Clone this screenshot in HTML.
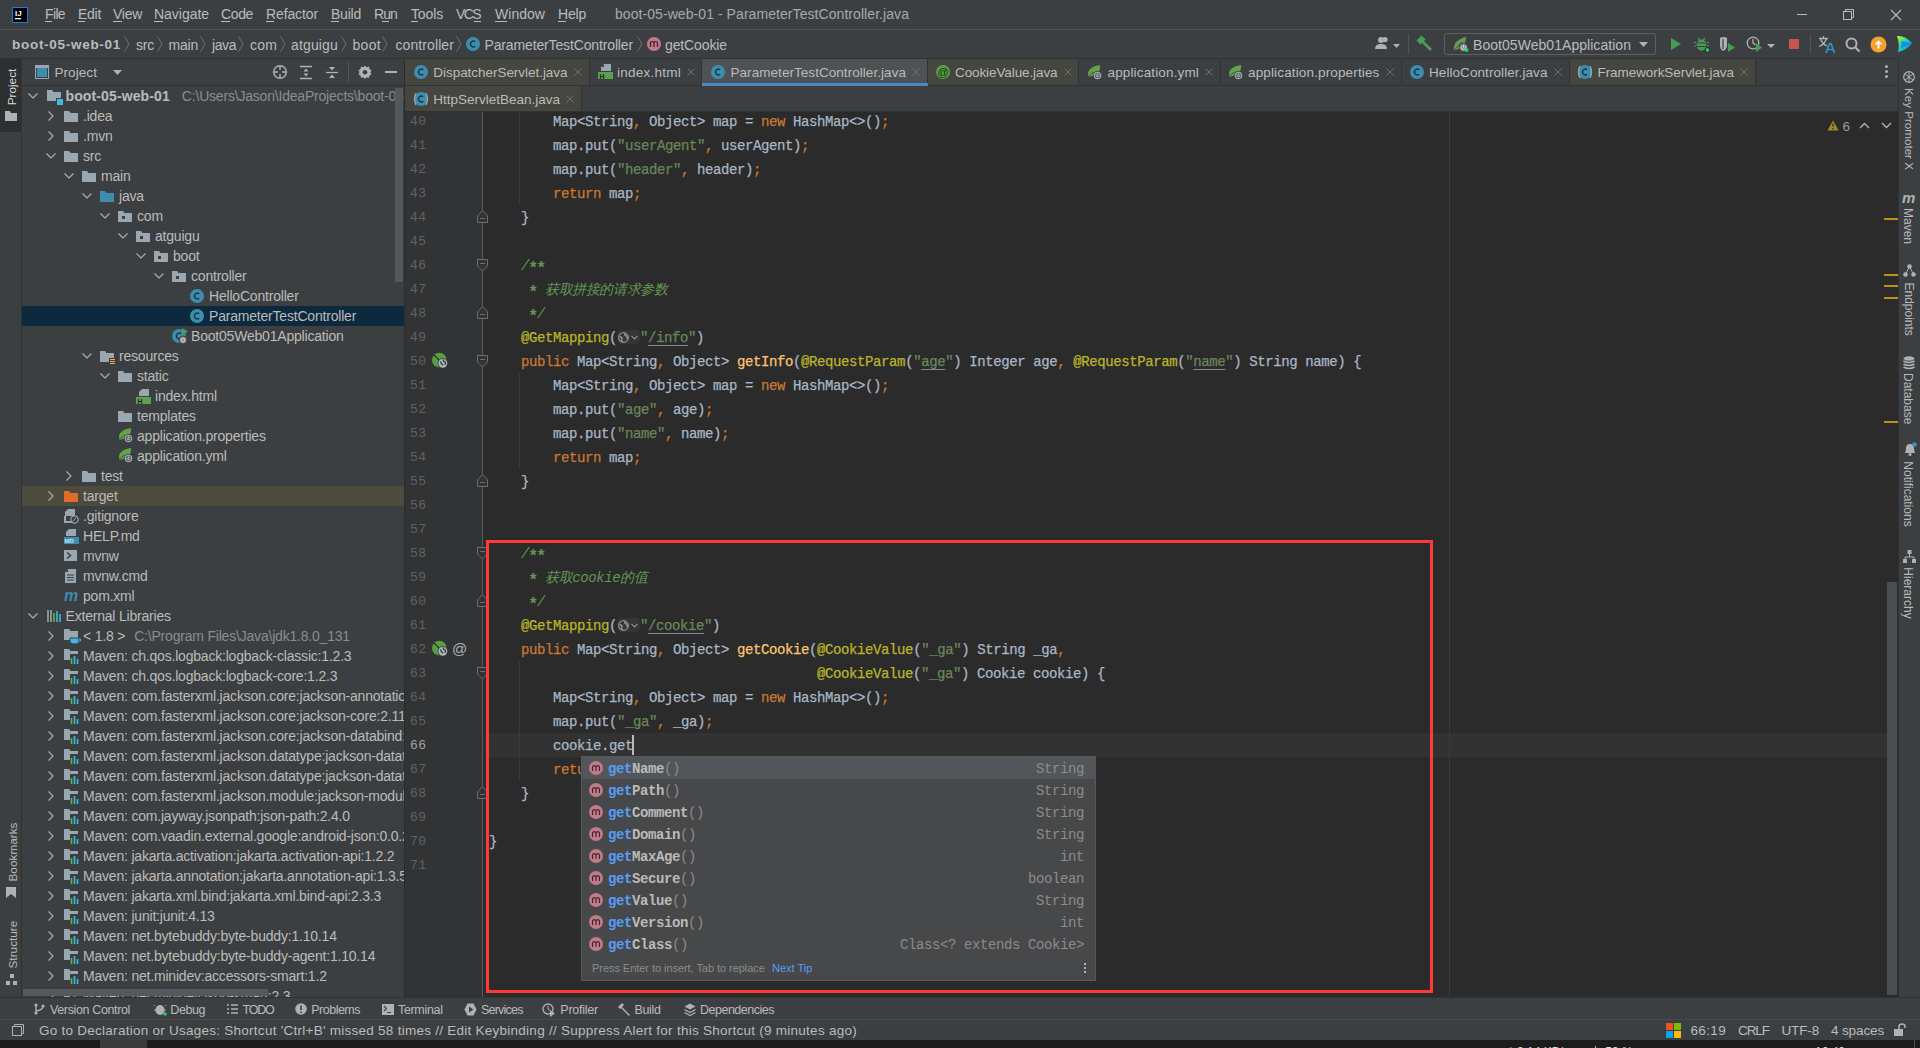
<!DOCTYPE html><html><head><meta charset="utf-8"><style>
html,body{margin:0;padding:0;width:1920px;height:1048px;overflow:hidden;background:#3C3F41}
body>div,body>svg{position:absolute}
.clip{position:absolute;overflow:hidden}
.clip>div,.clip>svg{position:absolute}
</style></head><body>
<div style="left:0px;top:0px;width:1920px;height:1048px;background:#3C3F41;"></div>
<div style="left:0px;top:29px;width:1920px;height:1px;background:#515658;"></div>
<div style="left:0px;top:58px;width:21px;height:939px;background:#3C3F41;"></div>
<div style="left:0px;top:58px;width:21px;height:74px;background:#2D2F30;"></div>
<div style="left:21px;top:58px;width:1px;height:939px;background:#323232;"></div>
<div style="left:22px;top:58px;width:382px;height:939px;background:#3C3F41;"></div>
<div style="left:22px;top:85px;width:382px;height:1px;background:#323232;"></div>
<div style="left:404px;top:58px;width:1px;height:939px;background:#2B2B2B;"></div>
<div style="left:405px;top:58px;width:1493px;height:54px;background:#3C3F41;"></div>
<div style="left:405px;top:85px;width:1493px;height:1px;background:#323232;"></div>
<div style="left:405px;top:111px;width:1493px;height:1px;background:#323232;"></div>
<div style="left:405px;top:112px;width:1493px;height:885px;background:#2B2B2B;"></div>
<div style="left:405px;top:112px;width:78px;height:885px;background:#313335;"></div>
<div style="left:0px;top:58px;width:1920px;height:1px;background:#323232;"></div>
<div style="left:1898px;top:58px;width:22px;height:939px;background:#3C3F41;"></div>
<div style="left:1898px;top:58px;width:1px;height:939px;background:#323232;"></div>
<div style="left:0px;top:997px;width:1920px;height:1px;background:#323232;"></div>
<div style="left:0px;top:998px;width:1920px;height:21px;background:#3C3F41;"></div>
<div style="left:0px;top:1019px;width:1920px;height:1px;background:#4A4D4F;"></div>
<div style="left:0px;top:1020px;width:1920px;height:20px;background:#3C3F41;"></div>
<div style="left:0px;top:1040px;width:1920px;height:8px;background:#1C1C1C;"></div>
<div style="left:100px;top:1040px;width:47px;height:8px;background:#3A3A3A;"></div>
<svg style="left:12px;top:7px;" width="16" height="16" viewBox="0 0 16 16"><rect x="0.5" y="0.5" width="15" height="15" fill="#000" stroke="#1E7BE0" stroke-width="1"/><text x="3" y="9" font-family="Liberation Sans" font-weight="bold" font-size="8" fill="#fff">IJ</text><rect x="3" y="11" width="6" height="1.3" fill="#fff"/></svg>
<div style="left:45px;top:6.33px;font:14px/normal 'Liberation Sans',sans-serif;color:#BBBBBB;white-space:pre;letter-spacing:-0.640px;">File</div>
<div style="left:45px;top:20.5px;width:7px;height:1px;background:#BBBBBB;"></div>
<div style="left:78px;top:6.33px;font:14px/normal 'Liberation Sans',sans-serif;color:#BBBBBB;white-space:pre;letter-spacing:-0.281px;">Edit</div>
<div style="left:78px;top:20.5px;width:7px;height:1px;background:#BBBBBB;"></div>
<div style="left:113px;top:6.33px;font:14px/normal 'Liberation Sans',sans-serif;color:#BBBBBB;white-space:pre;letter-spacing:-0.273px;">View</div>
<div style="left:113px;top:20.5px;width:9px;height:1px;background:#BBBBBB;"></div>
<div style="left:154px;top:6.33px;font:14px/normal 'Liberation Sans',sans-serif;color:#BBBBBB;white-space:pre;letter-spacing:-0.032px;">Navigate</div>
<div style="left:154px;top:20.5px;width:9px;height:1px;background:#BBBBBB;"></div>
<div style="left:221px;top:6.33px;font:14px/normal 'Liberation Sans',sans-serif;color:#BBBBBB;white-space:pre;letter-spacing:-0.367px;">Code</div>
<div style="left:221px;top:20.5px;width:9px;height:1px;background:#BBBBBB;"></div>
<div style="left:266px;top:6.33px;font:14px/normal 'Liberation Sans',sans-serif;color:#BBBBBB;white-space:pre;letter-spacing:-0.114px;">Refactor</div>
<div style="left:266px;top:20.5px;width:8px;height:1px;background:#BBBBBB;"></div>
<div style="left:331px;top:6.33px;font:14px/normal 'Liberation Sans',sans-serif;color:#BBBBBB;white-space:pre;letter-spacing:-0.227px;">Build</div>
<div style="left:331px;top:20.5px;width:8px;height:1px;background:#BBBBBB;"></div>
<div style="left:374px;top:6.33px;font:14px/normal 'Liberation Sans',sans-serif;color:#BBBBBB;white-space:pre;letter-spacing:-0.894px;">Run</div>
<div style="left:382px;top:20.5px;width:7px;height:1px;background:#BBBBBB;"></div>
<div style="left:411px;top:6.33px;font:14px/normal 'Liberation Sans',sans-serif;color:#BBBBBB;white-space:pre;letter-spacing:-0.137px;">Tools</div>
<div style="left:411px;top:20.5px;width:7px;height:1px;background:#BBBBBB;"></div>
<div style="left:456px;top:6.33px;font:14px/normal 'Liberation Sans',sans-serif;color:#BBBBBB;white-space:pre;letter-spacing:-1.596px;">VCS</div>
<div style="left:474px;top:20.5px;width:7px;height:1px;background:#BBBBBB;"></div>
<div style="left:495px;top:6.33px;font:14px/normal 'Liberation Sans',sans-serif;color:#BBBBBB;white-space:pre;letter-spacing:0.034px;">Window</div>
<div style="left:495px;top:20.5px;width:12px;height:1px;background:#BBBBBB;"></div>
<div style="left:558px;top:6.33px;font:14px/normal 'Liberation Sans',sans-serif;color:#BBBBBB;white-space:pre;letter-spacing:-0.199px;">Help</div>
<div style="left:558px;top:20.5px;width:8px;height:1px;background:#BBBBBB;"></div>
<div style="left:615px;top:6.33px;font:14px/normal 'Liberation Sans',sans-serif;color:#A9A9A9;white-space:pre;letter-spacing:0.066px;">boot-05-web-01 - ParameterTestController.java</div>
<div style="left:1797px;top:14px;width:10px;height:1px;background:#BBBBBB;"></div>
<svg style="left:1843px;top:9px;" width="12" height="11" viewBox="0 0 12 11"><rect x="0.5" y="2.5" width="8" height="8" fill="none" stroke="#BBB"/><path d="M2.5 2.5V0.5h8v8h-2" fill="none" stroke="#BBB"/></svg>
<svg style="left:1890px;top:9px;" width="12" height="12" viewBox="0 0 12 12"><path d="M1 1L11 11M11 1L1 11" stroke="#BBB" stroke-width="1.1"/></svg>
<div style="left:12px;top:37.28px;font:13.5px/normal 'Liberation Sans',sans-serif;color:#BBBBBB;white-space:pre;letter-spacing:0.713px;font-weight:bold;">boot-05-web-01</div>
<svg style="left:124px;top:36.0px;" width="6" height="16" viewBox="0 0 6 16"><path d="M0.5 0.5L5 8.0L0.5 15.5" fill="none" stroke="#6E7072" stroke-width="1"/></svg>
<div style="left:136px;top:36.83px;font:14px/normal 'Liberation Sans',sans-serif;color:#BBBBBB;white-space:pre;letter-spacing:-0.221px;">src</div>
<svg style="left:156.5px;top:36.0px;" width="6" height="16" viewBox="0 0 6 16"><path d="M0.5 0.5L5 8.0L0.5 15.5" fill="none" stroke="#6E7072" stroke-width="1"/></svg>
<div style="left:168.5px;top:36.83px;font:14px/normal 'Liberation Sans',sans-serif;color:#BBBBBB;white-space:pre;letter-spacing:-0.212px;">main</div>
<svg style="left:200px;top:36.0px;" width="6" height="16" viewBox="0 0 6 16"><path d="M0.5 0.5L5 8.0L0.5 15.5" fill="none" stroke="#6E7072" stroke-width="1"/></svg>
<div style="left:212px;top:36.83px;font:14px/normal 'Liberation Sans',sans-serif;color:#BBBBBB;white-space:pre;letter-spacing:-0.421px;">java</div>
<svg style="left:238px;top:36.0px;" width="6" height="16" viewBox="0 0 6 16"><path d="M0.5 0.5L5 8.0L0.5 15.5" fill="none" stroke="#6E7072" stroke-width="1"/></svg>
<div style="left:250px;top:36.83px;font:14px/normal 'Liberation Sans',sans-serif;color:#BBBBBB;white-space:pre;letter-spacing:0.184px;">com</div>
<svg style="left:279.5px;top:36.0px;" width="6" height="16" viewBox="0 0 6 16"><path d="M0.5 0.5L5 8.0L0.5 15.5" fill="none" stroke="#6E7072" stroke-width="1"/></svg>
<div style="left:291px;top:36.83px;font:14px/normal 'Liberation Sans',sans-serif;color:#BBBBBB;white-space:pre;letter-spacing:0.153px;">atguigu</div>
<svg style="left:340.5px;top:36.0px;" width="6" height="16" viewBox="0 0 6 16"><path d="M0.5 0.5L5 8.0L0.5 15.5" fill="none" stroke="#6E7072" stroke-width="1"/></svg>
<div style="left:352.5px;top:36.83px;font:14px/normal 'Liberation Sans',sans-serif;color:#BBBBBB;white-space:pre;letter-spacing:0.313px;">boot</div>
<svg style="left:382px;top:36.0px;" width="6" height="16" viewBox="0 0 6 16"><path d="M0.5 0.5L5 8.0L0.5 15.5" fill="none" stroke="#6E7072" stroke-width="1"/></svg>
<div style="left:395.5px;top:36.83px;font:14px/normal 'Liberation Sans',sans-serif;color:#BBBBBB;white-space:pre;letter-spacing:0.092px;">controller</div>
<svg style="left:456px;top:36.0px;" width="6" height="16" viewBox="0 0 6 16"><path d="M0.5 0.5L5 8.0L0.5 15.5" fill="none" stroke="#6E7072" stroke-width="1"/></svg>
<svg style="left:465.5px;top:37px;" width="14" height="14" viewBox="0 0 14 14"><circle cx="7" cy="7" r="7" fill="#3D8DAE"/><path d="M9.3 4.8A2.9 2.9 0 1 0 9.3 9.2" fill="none" stroke="#1E3540" stroke-width="1.3"/></svg>
<div style="left:484.5px;top:36.83px;font:14px/normal 'Liberation Sans',sans-serif;color:#BBBBBB;white-space:pre;letter-spacing:-0.140px;">ParameterTestController</div>
<svg style="left:637px;top:36.0px;" width="6" height="16" viewBox="0 0 6 16"><path d="M0.5 0.5L5 8.0L0.5 15.5" fill="none" stroke="#6E7072" stroke-width="1"/></svg>
<svg style="left:647px;top:37px;" width="14" height="14" viewBox="0 0 14 14"><circle cx="7" cy="7" r="7" fill="#C27889"/><path d="M3.5 10V4.5M3.5 6.5Q3.5 4.5 5.3 4.5Q7 4.5 7 6.5V10M7 6.5Q7 4.5 8.8 4.5Q10.5 4.5 10.5 6.5V10" fill="none" stroke="#3A2328" stroke-width="1.2"/></svg>
<div style="left:665px;top:36.83px;font:14px/normal 'Liberation Sans',sans-serif;color:#BBBBBB;white-space:pre;letter-spacing:-0.116px;">getCookie</div>
<svg style="left:1375px;top:36px;" width="26" height="16" viewBox="0 0 26 16"><circle cx="6" cy="4" r="3" fill="#AFB1B3"/><path d="M0 13Q0 8 6 8Q12 8 12 13Z" fill="#AFB1B3"/><circle cx="10" cy="3.5" r="2.6" fill="#AFB1B3"/><path d="M18 8h7l-3.5 4z" fill="#AFB1B3"/></svg>
<div style="left:1408px;top:34px;width:1px;height:20px;background:#515658;"></div>
<svg style="left:1416px;top:35px;" width="17" height="17" viewBox="0 0 17 17"><path d="M0.5 5.5L5.5 0.5L9.5 4.5L4.5 9.5Z" fill="#499C54"/><path d="M6 6L15 15" stroke="#499C54" stroke-width="2.6"/></svg>
<div style="left:1444px;top:33px;width:210px;height:20px;border:1px solid #5E6060;border-radius:3px;background:#3C3F41"></div>
<svg style="left:1453px;top:37px;" width="17" height="16" viewBox="0 0 17 16"><path d="M1 13C0 6 5 2 13 0C13 8 9 12 1 13Z" fill="#6A9955"/><path d="M2 12L9 5" stroke="#3C3F41" stroke-width="0.8"/><circle cx="10.5" cy="10.5" r="4.3" fill="#8A8D8F" stroke="#3C3F41" stroke-width="1"/><path d="M9 9.2A2 2 0 1 0 12 9.2M10.5 8V10.5" fill="none" stroke="#E0E0E0" stroke-width="0.9"/><circle cx="13.5" cy="13" r="2" fill="#30D158"/></svg>
<div style="left:1473px;top:36.83px;font:14px/normal 'Liberation Sans',sans-serif;color:#BBBBBB;white-space:pre;letter-spacing:0.047px;">Boot05Web01Application</div>
<svg style="left:1639px;top:42px;" width="9" height="5" viewBox="0 0 9 5"><path d="M0 0h9L4.5 5z" fill="#AFB1B3"/></svg>
<svg style="left:1670px;top:38px;" width="12" height="12" viewBox="0 0 12 12"><path d="M1 0L11 6L1 12Z" fill="#499C54"/></svg>
<svg style="left:1694px;top:36px;" width="17" height="17" viewBox="0 0 17 17"><path d="M4 2L6 4M11 2L9 4" stroke="#499C54" stroke-width="1.3"/><ellipse cx="7.5" cy="9" rx="5" ry="5.5" fill="#499C54"/><path d="M0.5 7H14.5M0.5 10.5H14.5" stroke="#3C3F41" stroke-width="1"/><path d="M0 6.5H2M13 6.5h2M0 10h2M13 10h2" stroke="#499C54" stroke-width="1.2"/><circle cx="13.5" cy="14" r="2.3" fill="#30D158" stroke="#1b1b1b" stroke-width="0.8"/></svg>
<svg style="left:1719px;top:36px;" width="17" height="16" viewBox="0 0 17 16"><path d="M1 2Q5 0 8 2V10Q8 13 4 15Q1 13 1 10Z" fill="#AFB1B3"/><path d="M4 3V13" stroke="#3C3F41" stroke-width="1.2"/><path d="M9 7L16 11.5L9 16Z" fill="#499C54"/></svg>
<svg style="left:1746px;top:36px;" width="30" height="16" viewBox="0 0 30 16"><circle cx="7" cy="7" r="5.8" fill="none" stroke="#AFB1B3" stroke-width="1.3"/><path d="M7 3V7L9.5 9" stroke="#AFB1B3" stroke-width="1.3" fill="none"/><path d="M10 7L16 11.5L10 16Z" fill="#499C54"/><path d="M21 8h8l-4 4z" fill="#AFB1B3"/></svg>
<div style="left:1789px;top:39px;width:10px;height:10px;background:#C75450;"></div>
<div style="left:1810px;top:34px;width:1px;height:20px;background:#515658;"></div>
<svg style="left:1818px;top:35px;" width="19" height="19" viewBox="0 0 19 19"><path d="M1 3.5H10M5.5 1V3.5M2.5 3.5Q4 9 9 11M8.5 3.5Q7 9 1 11.5" fill="none" stroke="#AFB1B3" stroke-width="1.3"/><path d="M8 18L11.5 8.5H13L16.5 18M9.5 14.5H15" fill="none" stroke="#3592C4" stroke-width="1.7"/></svg>
<svg style="left:1845px;top:37px;" width="16" height="16" viewBox="0 0 16 16"><circle cx="6.5" cy="6.5" r="5" fill="none" stroke="#AFB1B3" stroke-width="2"/><path d="M10 10L14.5 14.5" stroke="#AFB1B3" stroke-width="2.2"/></svg>
<svg style="left:1870px;top:36px;" width="17" height="17" viewBox="0 0 17 17"><circle cx="8.5" cy="8.5" r="8" fill="#F4A12E"/><path d="M8.5 7V12.5" stroke="#fff" stroke-width="1.8"/><path d="M4.8 8.2L8.5 4.2L12.2 8.2Z" fill="#fff"/></svg>
<svg style="left:1896px;top:35px;" width="17" height="18" viewBox="0 0 17 18"><defs><linearGradient id="jg" x1="0" y1="0" x2="1" y2="1"><stop offset="0" stop-color="#D7F01E"/><stop offset="0.45" stop-color="#21D7A8"/><stop offset="1" stop-color="#087CFA"/></linearGradient></defs><path d="M1 1Q9 0 16 8Q10 16 2 17Q4 9 1 1Z" fill="url(#jg)"/><path d="M5 6Q11 7 16 8Q10 12 5 13Z" fill="#087CFA" opacity="0.7"/></svg>
<div style="left:405px;top:59px;width:184px;height:26px;background:#45463F;"></div>
<div style="left:589px;top:59px;width:1px;height:26px;background:#323232;"></div>
<svg style="left:414px;top:65px;" width="14" height="14" viewBox="0 0 14 14"><circle cx="7" cy="7" r="7" fill="#3D8DAE"/><path d="M9.3 4.8A2.9 2.9 0 1 0 9.3 9.2" fill="none" stroke="#1E3540" stroke-width="1.3"/></svg>
<div style="left:433.3px;top:64.78px;font:13.5px/normal 'Liberation Sans',sans-serif;color:#BBBBBB;white-space:pre;letter-spacing:-0.039px;">DispatcherServlet.java</div>
<svg style="left:574px;top:68px;" width="8" height="8" viewBox="0 0 8 8"><path d="M0.5 0.5L7.5 7.5M7.5 0.5L0.5 7.5" stroke="#6E7072" stroke-width="1"/></svg>
<div style="left:590px;top:59px;width:111px;height:26px;background:#3C3F41;"></div>
<div style="left:701px;top:59px;width:1px;height:26px;background:#323232;"></div>
<svg style="left:598px;top:63px;" width="16" height="16" viewBox="0 0 16 16"><path d="M6 1H13V8H3V4Z" fill="#9AA7B0"/><path d="M6 1V4H3" fill="#3C3F41"/><rect x="0" y="9" width="15" height="7" fill="#59A14C"/><text x="1.5" y="15.5" font-family="Liberation Sans" font-weight="bold" font-size="7" fill="#1E2A1A">H</text></svg>
<div style="left:617px;top:64.78px;font:13.5px/normal 'Liberation Sans',sans-serif;color:#BBBBBB;white-space:pre;letter-spacing:0.247px;">index.html</div>
<svg style="left:687px;top:68px;" width="8" height="8" viewBox="0 0 8 8"><path d="M0.5 0.5L7.5 7.5M7.5 0.5L0.5 7.5" stroke="#6E7072" stroke-width="1"/></svg>
<div style="left:702px;top:59px;width:225px;height:26px;background:#4E5254;"></div>
<div style="left:927px;top:59px;width:1px;height:26px;background:#323232;"></div>
<svg style="left:710.5px;top:65px;" width="14" height="14" viewBox="0 0 14 14"><circle cx="7" cy="7" r="7" fill="#3D8DAE"/><path d="M9.3 4.8A2.9 2.9 0 1 0 9.3 9.2" fill="none" stroke="#1E3540" stroke-width="1.3"/></svg>
<div style="left:730.5px;top:64.78px;font:13.5px/normal 'Liberation Sans',sans-serif;color:#BBBBBB;white-space:pre;letter-spacing:0.051px;">ParameterTestController.java</div>
<svg style="left:912px;top:68px;" width="8" height="8" viewBox="0 0 8 8"><path d="M0.5 0.5L7.5 7.5M7.5 0.5L0.5 7.5" stroke="#6E7072" stroke-width="1"/></svg>
<div style="left:928px;top:59px;width:150px;height:26px;background:#45463F;"></div>
<div style="left:1078px;top:59px;width:1px;height:26px;background:#323232;"></div>
<svg style="left:936px;top:65px;" width="14" height="14" viewBox="0 0 14 14"><circle cx="7" cy="7" r="7" fill="#599E41"/><text x="7" y="10.8" text-anchor="middle" font-family="Liberation Sans" font-size="11" fill="#1A2A18">@</text></svg>
<div style="left:955px;top:64.78px;font:13.5px/normal 'Liberation Sans',sans-serif;color:#BBBBBB;white-space:pre;letter-spacing:-0.098px;">CookieValue.java</div>
<svg style="left:1064px;top:68px;" width="8" height="8" viewBox="0 0 8 8"><path d="M0.5 0.5L7.5 7.5M7.5 0.5L0.5 7.5" stroke="#6E7072" stroke-width="1"/></svg>
<div style="left:1079px;top:59px;width:141px;height:26px;background:#3C3F41;"></div>
<div style="left:1220px;top:59px;width:1px;height:26px;background:#323232;"></div>
<svg style="left:1087px;top:65px;" width="16" height="16" viewBox="0 0 16 16"><path d="M1.5 11.5C-0.5 6 4 1 13 0C13.5 6 11 10 4.5 11C3 11.5 2 12 1.5 11.5Z" fill="#62A24A"/><path d="M1.5 11.5L6 7" stroke="#3C3F41" stroke-width="0.8"/><circle cx="10.5" cy="10.5" r="4.6" fill="#3C3F41"/><circle cx="10.5" cy="10.5" r="3.8" fill="#9AA7B0"/><circle cx="10.5" cy="10.5" r="2.6" fill="#4A4D50"/><path d="M9.2 9.6A1.5 1.5 0 1 0 11.8 9.6M10.5 8.6V10.4" fill="none" stroke="#E8E8E8" stroke-width="0.8"/></svg>
<div style="left:1107.5px;top:64.78px;font:13.5px/normal 'Liberation Sans',sans-serif;color:#BBBBBB;white-space:pre;letter-spacing:0.147px;">application.yml</div>
<svg style="left:1205px;top:68px;" width="8" height="8" viewBox="0 0 8 8"><path d="M0.5 0.5L7.5 7.5M7.5 0.5L0.5 7.5" stroke="#6E7072" stroke-width="1"/></svg>
<div style="left:1221px;top:59px;width:180px;height:26px;background:#3C3F41;"></div>
<div style="left:1401px;top:59px;width:1px;height:26px;background:#323232;"></div>
<svg style="left:1228px;top:65px;" width="16" height="16" viewBox="0 0 16 16"><path d="M1.5 11.5C-0.5 6 4 1 13 0C13.5 6 11 10 4.5 11C3 11.5 2 12 1.5 11.5Z" fill="#62A24A"/><path d="M1.5 11.5L6 7" stroke="#3C3F41" stroke-width="0.8"/><circle cx="10.5" cy="10.5" r="4.6" fill="#3C3F41"/><circle cx="10.5" cy="10.5" r="3.8" fill="#9AA7B0"/><circle cx="10.5" cy="10.5" r="2.6" fill="#4A4D50"/><path d="M9.2 9.6A1.5 1.5 0 1 0 11.8 9.6M10.5 8.6V10.4" fill="none" stroke="#E8E8E8" stroke-width="0.8"/></svg>
<div style="left:1248px;top:64.78px;font:13.5px/normal 'Liberation Sans',sans-serif;color:#BBBBBB;white-space:pre;letter-spacing:0.144px;">application.properties</div>
<svg style="left:1386px;top:68px;" width="8" height="8" viewBox="0 0 8 8"><path d="M0.5 0.5L7.5 7.5M7.5 0.5L0.5 7.5" stroke="#6E7072" stroke-width="1"/></svg>
<div style="left:1402px;top:59px;width:167px;height:26px;background:#3C3F41;"></div>
<div style="left:1569px;top:59px;width:1px;height:26px;background:#323232;"></div>
<svg style="left:1410px;top:65px;" width="14" height="14" viewBox="0 0 14 14"><circle cx="7" cy="7" r="7" fill="#3D8DAE"/><path d="M9.3 4.8A2.9 2.9 0 1 0 9.3 9.2" fill="none" stroke="#1E3540" stroke-width="1.3"/></svg>
<div style="left:1429px;top:64.78px;font:13.5px/normal 'Liberation Sans',sans-serif;color:#BBBBBB;white-space:pre;letter-spacing:0.072px;">HelloController.java</div>
<svg style="left:1554px;top:68px;" width="8" height="8" viewBox="0 0 8 8"><path d="M0.5 0.5L7.5 7.5M7.5 0.5L0.5 7.5" stroke="#6E7072" stroke-width="1"/></svg>
<div style="left:1570px;top:59px;width:185px;height:26px;background:#45463F;"></div>
<div style="left:1755px;top:59px;width:1px;height:26px;background:#323232;"></div>
<svg style="left:1577.5px;top:65px;" width="14" height="14" viewBox="0 0 14 14"><circle cx="7" cy="7" r="7" fill="#3D8DAE"/><path d="M9.3 4.8A2.9 2.9 0 1 0 9.3 9.2" fill="none" stroke="#1E3540" stroke-width="1.3"/></svg>
<svg style="left:1576.5px;top:64px;" width="16" height="16" viewBox="0 0 16 16"><path d="M3 2Q0 8 3 14M13 2Q16 8 13 14" fill="none" stroke="#9AA7B0" stroke-width="1.3"/></svg>
<div style="left:1597.5px;top:64.78px;font:13.5px/normal 'Liberation Sans',sans-serif;color:#BBBBBB;white-space:pre;letter-spacing:-0.074px;">FrameworkServlet.java</div>
<svg style="left:1740px;top:68px;" width="8" height="8" viewBox="0 0 8 8"><path d="M0.5 0.5L7.5 7.5M7.5 0.5L0.5 7.5" stroke="#6E7072" stroke-width="1"/></svg>
<div style="left:702px;top:83px;width:226px;height:3px;background:#4A88C7;"></div>
<div style="left:1884.5px;top:65.0px;width:3px;height:3px;background:#AFB1B3;border-radius:50%"></div>
<div style="left:1884.5px;top:70.0px;width:3px;height:3px;background:#AFB1B3;border-radius:50%"></div>
<div style="left:1884.5px;top:75.0px;width:3px;height:3px;background:#AFB1B3;border-radius:50%"></div>
<div style="left:405px;top:86px;width:176px;height:25px;background:#45463F;"></div>
<div style="left:581px;top:86px;width:1px;height:25px;background:#323232;"></div>
<svg style="left:414px;top:92px;" width="14" height="14" viewBox="0 0 14 14"><circle cx="7" cy="7" r="7" fill="#3D8DAE"/><path d="M9.3 4.8A2.9 2.9 0 1 0 9.3 9.2" fill="none" stroke="#1E3540" stroke-width="1.3"/></svg>
<svg style="left:413px;top:91px;" width="16" height="16" viewBox="0 0 16 16"><path d="M3 2Q0 8 3 14M13 2Q16 8 13 14" fill="none" stroke="#9AA7B0" stroke-width="1.3"/></svg>
<div style="left:433.3px;top:91.78px;font:13.5px/normal 'Liberation Sans',sans-serif;color:#BBBBBB;white-space:pre;letter-spacing:-0.006px;">HttpServletBean.java</div>
<svg style="left:566px;top:95px;" width="8" height="8" viewBox="0 0 8 8"><path d="M0.5 0.5L7.5 7.5M7.5 0.5L0.5 7.5" stroke="#6E7072" stroke-width="1"/></svg>
<svg style="left:35px;top:65px;" width="14" height="14" viewBox="0 0 14 14"><rect x="0.5" y="0.5" width="13" height="13" fill="none" stroke="#9AA7B0"/><rect x="2" y="3" width="10" height="9" fill="#3D8DAE"/><rect x="0.5" y="0.5" width="13" height="2.5" fill="#9AA7B0"/></svg>
<div style="left:54.4px;top:64.78px;font:13.5px/normal 'Liberation Sans',sans-serif;color:#BBBBBB;white-space:pre;letter-spacing:0.083px;">Project</div>
<svg style="left:113px;top:70px;" width="9" height="5" viewBox="0 0 9 5"><path d="M0 0h9L4.5 5z" fill="#AFB1B3"/></svg>
<svg style="left:272px;top:64px;" width="16" height="16" viewBox="0 0 16 16"><circle cx="8" cy="8" r="6.3" fill="none" stroke="#AFB1B3" stroke-width="1.4"/><path d="M8 2V6M8 10V14M2 8H6M10 8H14" stroke="#AFB1B3" stroke-width="1.4"/></svg>
<svg style="left:299px;top:64px;" width="14" height="16" viewBox="0 0 14 16"><path d="M1 2.5H13M1 14.5H13" stroke="#AFB1B3" stroke-width="1.3"/><path d="M4.5 7.5L7 4.5L9.5 7.5Z M4.5 9.5L7 12.5L9.5 9.5Z" fill="#AFB1B3"/></svg>
<svg style="left:325px;top:64px;" width="14" height="16" viewBox="0 0 14 16"><path d="M1 8.5H13" stroke="#AFB1B3" stroke-width="1.3"/><path d="M4 3L7 6.5L10 3Z M4 14L7 10.5L10 14Z" fill="#AFB1B3"/></svg>
<div style="left:348px;top:62px;width:1px;height:20px;background:#515658;"></div>
<svg style="left:358px;top:65px;" width="14" height="14" viewBox="0 0 14 14"><path d="M7 0.5L8.6 2.2L10.9 1.6L11.5 3.9L13.5 5.2L12.5 7.3L13.5 9.4L11.5 10.6L10.9 12.9L8.6 12.3L7 14L5.4 12.3L3.1 12.9L2.5 10.6L0.5 9.4L1.5 7.3L0.5 5.2L2.5 3.9L3.1 1.6L5.4 2.2Z" fill="#AFB1B3"/><circle cx="7" cy="7.2" r="2.3" fill="#3C3F41"/></svg>
<div style="left:385px;top:71px;width:12px;height:2px;background:#AFB1B3;"></div>
<div class="clip" style="left:22px;top:86px;width:382px;height:911px"><div style="left:0;top:220px;width:382px;height:20px;background:#0D293E"></div><div style="left:0;top:400px;width:382px;height:20px;background:#4D4A3E"></div><svg style="left:6px;top:7px" width="10" height="6" viewBox="0 0 10 6"><path d="M0.5 0.5L5 5L9.5 0.5" fill="none" stroke="#AFB1B3" stroke-width="1.1"/></svg><svg style="left:24.5px;top:3px" width="16" height="16" viewBox="0 0 16 16"><path d="M0 1H5L6.5 3H14V12H0Z" fill="#9AA7B0"/><rect x="9" y="9" width="7" height="7" fill="#3C3F41"/><rect x="10" y="10" width="6" height="6" fill="#40B6E0"/></svg><div style="left:43.5px;top:2.33px;font:bold 14px/normal 'Liberation Sans',sans-serif;color:#BBBBBB;white-space:pre;letter-spacing:0.12px">boot-05-web-01</div><div style="left:159.86015625px;top:2.33px;font:14px/normal 'Liberation Sans',sans-serif;color:#8C8C8C;white-space:pre;letter-spacing:-0.2px">C:\Users\Jason\IdeaProjects\boot-05-web-01</div><svg style="left:26px;top:25px" width="6" height="10" viewBox="0 0 6 10"><path d="M0.5 0.5L5 5L0.5 9.5" fill="none" stroke="#AFB1B3" stroke-width="1.1"/></svg><svg style="left:42px;top:24px" width="14" height="13" viewBox="0 0 14 13"><path d="M0 1H5L6.5 3H14V12H0Z" fill="#9AA7B0"/></svg><div style="left:61px;top:22.33px;font:14px/normal 'Liberation Sans',sans-serif;color:#BBBBBB;white-space:pre;letter-spacing:-0.2px">.idea</div><svg style="left:26px;top:45px" width="6" height="10" viewBox="0 0 6 10"><path d="M0.5 0.5L5 5L0.5 9.5" fill="none" stroke="#AFB1B3" stroke-width="1.1"/></svg><svg style="left:42px;top:44px" width="14" height="13" viewBox="0 0 14 13"><path d="M0 1H5L6.5 3H14V12H0Z" fill="#9AA7B0"/></svg><div style="left:61px;top:42.33px;font:14px/normal 'Liberation Sans',sans-serif;color:#BBBBBB;white-space:pre;letter-spacing:-0.2px">.mvn</div><svg style="left:24px;top:67px" width="10" height="6" viewBox="0 0 10 6"><path d="M0.5 0.5L5 5L9.5 0.5" fill="none" stroke="#AFB1B3" stroke-width="1.1"/></svg><svg style="left:42px;top:64px" width="14" height="13" viewBox="0 0 14 13"><path d="M0 1H5L6.5 3H14V12H0Z" fill="#9AA7B0"/></svg><div style="left:61px;top:62.33px;font:14px/normal 'Liberation Sans',sans-serif;color:#BBBBBB;white-space:pre;letter-spacing:-0.2px">src</div><svg style="left:42px;top:87px" width="10" height="6" viewBox="0 0 10 6"><path d="M0.5 0.5L5 5L9.5 0.5" fill="none" stroke="#AFB1B3" stroke-width="1.1"/></svg><svg style="left:60px;top:84px" width="14" height="13" viewBox="0 0 14 13"><path d="M0 1H5L6.5 3H14V12H0Z" fill="#9AA7B0"/></svg><div style="left:79px;top:82.33px;font:14px/normal 'Liberation Sans',sans-serif;color:#BBBBBB;white-space:pre;letter-spacing:-0.2px">main</div><svg style="left:60px;top:107px" width="10" height="6" viewBox="0 0 10 6"><path d="M0.5 0.5L5 5L9.5 0.5" fill="none" stroke="#AFB1B3" stroke-width="1.1"/></svg><svg style="left:78px;top:104px" width="14" height="13" viewBox="0 0 14 13"><path d="M0 1H5L6.5 3H14V12H0Z" fill="#3D8DAE"/></svg><div style="left:97px;top:102.33px;font:14px/normal 'Liberation Sans',sans-serif;color:#BBBBBB;white-space:pre;letter-spacing:-0.2px">java</div><svg style="left:78px;top:127px" width="10" height="6" viewBox="0 0 10 6"><path d="M0.5 0.5L5 5L9.5 0.5" fill="none" stroke="#AFB1B3" stroke-width="1.1"/></svg><svg style="left:96px;top:124px" width="14" height="13" viewBox="0 0 14 13"><path d="M0 1H5L6.5 3H14V12H0Z" fill="#9AA7B0"/><rect x="4" y="6" width="3" height="3" fill="#3C3F41"/></svg><div style="left:115px;top:122.33px;font:14px/normal 'Liberation Sans',sans-serif;color:#BBBBBB;white-space:pre;letter-spacing:-0.2px">com</div><svg style="left:96px;top:147px" width="10" height="6" viewBox="0 0 10 6"><path d="M0.5 0.5L5 5L9.5 0.5" fill="none" stroke="#AFB1B3" stroke-width="1.1"/></svg><svg style="left:114px;top:144px" width="14" height="13" viewBox="0 0 14 13"><path d="M0 1H5L6.5 3H14V12H0Z" fill="#9AA7B0"/><rect x="4" y="6" width="3" height="3" fill="#3C3F41"/></svg><div style="left:133px;top:142.33px;font:14px/normal 'Liberation Sans',sans-serif;color:#BBBBBB;white-space:pre;letter-spacing:-0.2px">atguigu</div><svg style="left:114px;top:167px" width="10" height="6" viewBox="0 0 10 6"><path d="M0.5 0.5L5 5L9.5 0.5" fill="none" stroke="#AFB1B3" stroke-width="1.1"/></svg><svg style="left:132px;top:164px" width="14" height="13" viewBox="0 0 14 13"><path d="M0 1H5L6.5 3H14V12H0Z" fill="#9AA7B0"/><rect x="4" y="6" width="3" height="3" fill="#3C3F41"/></svg><div style="left:151px;top:162.33px;font:14px/normal 'Liberation Sans',sans-serif;color:#BBBBBB;white-space:pre;letter-spacing:-0.2px">boot</div><svg style="left:132px;top:187px" width="10" height="6" viewBox="0 0 10 6"><path d="M0.5 0.5L5 5L9.5 0.5" fill="none" stroke="#AFB1B3" stroke-width="1.1"/></svg><svg style="left:150px;top:184px" width="14" height="13" viewBox="0 0 14 13"><path d="M0 1H5L6.5 3H14V12H0Z" fill="#9AA7B0"/><rect x="4" y="6" width="3" height="3" fill="#3C3F41"/></svg><div style="left:169px;top:182.33px;font:14px/normal 'Liberation Sans',sans-serif;color:#BBBBBB;white-space:pre;letter-spacing:-0.2px">controller</div><svg style="left:168px;top:203px" width="14" height="14" viewBox="0 0 14 14"><circle cx="7" cy="7" r="7" fill="#3D8DAE"/><path d="M9.3 4.8A2.9 2.9 0 1 0 9.3 9.2" fill="none" stroke="#1E3540" stroke-width="1.3"/></svg><div style="left:187px;top:202.33px;font:14px/normal 'Liberation Sans',sans-serif;color:#BBBBBB;white-space:pre;letter-spacing:-0.2px">HelloController</div><svg style="left:168px;top:223px" width="14" height="14" viewBox="0 0 14 14"><circle cx="7" cy="7" r="7" fill="#3D8DAE"/><path d="M9.3 4.8A2.9 2.9 0 1 0 9.3 9.2" fill="none" stroke="#1E3540" stroke-width="1.3"/></svg><div style="left:187px;top:222.33px;font:14px/normal 'Liberation Sans',sans-serif;color:#BBBBBB;white-space:pre;letter-spacing:-0.2px">ParameterTestController</div><svg style="left:150px;top:242px" width="17" height="17" viewBox="0 0 17 17"><circle cx="7" cy="8" r="7" fill="#3D8DAE"/><path d="M9.3 5.8A2.9 2.9 0 1 0 9.3 10.2" fill="none" stroke="#1E3540" stroke-width="1.3"/><path d="M10 0L16 3.5L10 7Z" fill="#499C54"/><circle cx="11" cy="12" r="4" fill="#8A8D8F" stroke="#3C3F41"/><circle cx="11" cy="12" r="1.8" fill="none" stroke="#ddd" stroke-width="0.8"/></svg><div style="left:169px;top:242.33px;font:14px/normal 'Liberation Sans',sans-serif;color:#BBBBBB;white-space:pre;letter-spacing:-0.2px">Boot05Web01Application</div><svg style="left:60px;top:267px" width="10" height="6" viewBox="0 0 10 6"><path d="M0.5 0.5L5 5L9.5 0.5" fill="none" stroke="#AFB1B3" stroke-width="1.1"/></svg><svg style="left:78px;top:264px" width="16" height="15" viewBox="0 0 16 15"><path d="M0 1H5L6.5 3H14V12H0Z" fill="#9AA7B0"/><rect x="9" y="8" width="7" height="7" fill="#3C3F41"/><path d="M10 9.5H15M10 11.5H15M10 13.5H15" stroke="#F4AF3D" stroke-width="1.1"/></svg><div style="left:97px;top:262.33px;font:14px/normal 'Liberation Sans',sans-serif;color:#BBBBBB;white-space:pre;letter-spacing:-0.2px">resources</div><svg style="left:78px;top:287px" width="10" height="6" viewBox="0 0 10 6"><path d="M0.5 0.5L5 5L9.5 0.5" fill="none" stroke="#AFB1B3" stroke-width="1.1"/></svg><svg style="left:96px;top:284px" width="14" height="13" viewBox="0 0 14 13"><path d="M0 1H5L6.5 3H14V12H0Z" fill="#9AA7B0"/></svg><div style="left:115px;top:282.33px;font:14px/normal 'Liberation Sans',sans-serif;color:#BBBBBB;white-space:pre;letter-spacing:-0.2px">static</div><svg style="left:114px;top:302px" width="16" height="16" viewBox="0 0 16 16"><path d="M6 1H13V8H3V4Z" fill="#9AA7B0"/><rect x="0" y="9" width="15" height="7" fill="#59A14C"/><text x="1.5" y="15.5" font-family="Liberation Sans" font-weight="bold" font-size="7" fill="#1E2A1A">H</text></svg><div style="left:133px;top:302.33px;font:14px/normal 'Liberation Sans',sans-serif;color:#BBBBBB;white-space:pre;letter-spacing:-0.2px">index.html</div><svg style="left:96px;top:324px" width="14" height="13" viewBox="0 0 14 13"><path d="M0 1H5L6.5 3H14V12H0Z" fill="#9AA7B0"/></svg><div style="left:115px;top:322.33px;font:14px/normal 'Liberation Sans',sans-serif;color:#BBBBBB;white-space:pre;letter-spacing:-0.2px">templates</div><svg style="left:96px;top:342px" width="16" height="16" viewBox="0 0 16 16"><path d="M1.5 11.5C-0.5 6 4 1 13 0C13.5 6 11 10 4.5 11C3 11.5 2 12 1.5 11.5Z" fill="#62A24A"/><path d="M1.5 11.5L6 7" stroke="#3C3F41" stroke-width="0.8"/><circle cx="10.5" cy="10.5" r="4.6" fill="#3C3F41"/><circle cx="10.5" cy="10.5" r="3.8" fill="#9AA7B0"/><circle cx="10.5" cy="10.5" r="2.6" fill="#4A4D50"/><path d="M9.2 9.6A1.5 1.5 0 1 0 11.8 9.6M10.5 8.6V10.4" fill="none" stroke="#E8E8E8" stroke-width="0.8"/></svg><div style="left:115px;top:342.33px;font:14px/normal 'Liberation Sans',sans-serif;color:#BBBBBB;white-space:pre;letter-spacing:-0.2px">application.properties</div><svg style="left:96px;top:362px" width="16" height="16" viewBox="0 0 16 16"><path d="M1.5 11.5C-0.5 6 4 1 13 0C13.5 6 11 10 4.5 11C3 11.5 2 12 1.5 11.5Z" fill="#62A24A"/><path d="M1.5 11.5L6 7" stroke="#3C3F41" stroke-width="0.8"/><circle cx="10.5" cy="10.5" r="4.6" fill="#3C3F41"/><circle cx="10.5" cy="10.5" r="3.8" fill="#9AA7B0"/><circle cx="10.5" cy="10.5" r="2.6" fill="#4A4D50"/><path d="M9.2 9.6A1.5 1.5 0 1 0 11.8 9.6M10.5 8.6V10.4" fill="none" stroke="#E8E8E8" stroke-width="0.8"/></svg><div style="left:115px;top:362.33px;font:14px/normal 'Liberation Sans',sans-serif;color:#BBBBBB;white-space:pre;letter-spacing:-0.2px">application.yml</div><svg style="left:44px;top:385px" width="6" height="10" viewBox="0 0 6 10"><path d="M0.5 0.5L5 5L0.5 9.5" fill="none" stroke="#AFB1B3" stroke-width="1.1"/></svg><svg style="left:60px;top:384px" width="14" height="13" viewBox="0 0 14 13"><path d="M0 1H5L6.5 3H14V12H0Z" fill="#9AA7B0"/></svg><div style="left:79px;top:382.33px;font:14px/normal 'Liberation Sans',sans-serif;color:#BBBBBB;white-space:pre;letter-spacing:-0.2px">test</div><svg style="left:26px;top:405px" width="6" height="10" viewBox="0 0 6 10"><path d="M0.5 0.5L5 5L0.5 9.5" fill="none" stroke="#AFB1B3" stroke-width="1.1"/></svg><svg style="left:42px;top:404px" width="14" height="13" viewBox="0 0 14 13"><path d="M0 1H5L6.5 3H14V12H0Z" fill="#E06C29"/></svg><div style="left:61px;top:402.33px;font:14px/normal 'Liberation Sans',sans-serif;color:#BBBBBB;white-space:pre;letter-spacing:-0.2px">target</div><svg style="left:42px;top:422px" width="16" height="16" viewBox="0 0 16 16"><path d="M4 1H11V8H1V4Z" fill="#9AA7B0"/><path d="M1 8V14H8" fill="none" stroke="#9AA7B0" stroke-width="2"/><circle cx="10.5" cy="11.5" r="3.7" fill="#3C3F41" stroke="#9AA7B0" stroke-width="1.2"/><path d="M8.5 13.5L12.5 9.5" stroke="#9AA7B0" stroke-width="1"/></svg><div style="left:61px;top:422.33px;font:14px/normal 'Liberation Sans',sans-serif;color:#BBBBBB;white-space:pre;letter-spacing:-0.2px">.gitignore</div><svg style="left:42px;top:442px" width="16" height="16" viewBox="0 0 16 16"><path d="M5 1H12V8H2V4Z" fill="#9AA7B0"/><rect x="0" y="9" width="15" height="7" fill="#3D8DAE"/><text x="0.5" y="15.3" font-family="Liberation Sans" font-weight="bold" font-size="6" fill="#D0E0F0">MD</text></svg><div style="left:61px;top:442.33px;font:14px/normal 'Liberation Sans',sans-serif;color:#BBBBBB;white-space:pre;letter-spacing:-0.2px">HELP.md</div><svg style="left:42px;top:464px" width="14" height="12" viewBox="0 0 14 12"><rect x="0" y="0" width="13" height="11" fill="#9AA7B0"/><path d="M3 2.5L6.5 5.5L3 8.5" fill="none" stroke="#3C3F41" stroke-width="1.5"/></svg><div style="left:61px;top:462.33px;font:14px/normal 'Liberation Sans',sans-serif;color:#BBBBBB;white-space:pre;letter-spacing:-0.2px">mvnw</div><svg style="left:42px;top:482px" width="14" height="16" viewBox="0 0 14 16"><path d="M4 1H12V15H1V4Z" fill="#9AA7B0"/><path d="M3 7H10M3 9.5H10M3 12H10" stroke="#3C3F41" stroke-width="1"/><path d="M4 1V4H1" fill="#3C3F41"/></svg><div style="left:61px;top:482.33px;font:14px/normal 'Liberation Sans',sans-serif;color:#BBBBBB;white-space:pre;letter-spacing:-0.2px">mvnw.cmd</div><svg style="left:42px;top:503px" width="16" height="14" viewBox="0 0 16 14"><text x="0" y="12" font-family="Liberation Sans" font-weight="bold" font-style="italic" font-size="16" fill="#3D8DAE">m</text></svg><div style="left:61px;top:502.33px;font:14px/normal 'Liberation Sans',sans-serif;color:#BBBBBB;white-space:pre;letter-spacing:-0.2px">pom.xml</div><svg style="left:6px;top:527px" width="10" height="6" viewBox="0 0 10 6"><path d="M0.5 0.5L5 5L9.5 0.5" fill="none" stroke="#AFB1B3" stroke-width="1.1"/></svg><svg style="left:24.5px;top:523px" width="15" height="14" viewBox="0 0 15 14"><path d="M1 1V13M4 1V13" stroke="#9AA7B0" stroke-width="1.6"/><path d="M7 4V13" stroke="#62B543" stroke-width="1.6"/><path d="M10 2V13M13 5V13" stroke="#40B6E0" stroke-width="1.6"/></svg><div style="left:43.5px;top:522.33px;font:14px/normal 'Liberation Sans',sans-serif;color:#BBBBBB;white-space:pre;letter-spacing:-0.2px">External Libraries</div><svg style="left:26px;top:545px" width="6" height="10" viewBox="0 0 6 10"><path d="M0.5 0.5L5 5L0.5 9.5" fill="none" stroke="#AFB1B3" stroke-width="1.1"/></svg><svg style="left:42px;top:542px" width="17" height="17" viewBox="0 0 17 17"><path d="M0 1H5L6.5 3H14V12H0Z" fill="#9AA7B0"/><path d="M6 10H15V13Q15 16 10.5 16Q6 16 6 13Z" fill="#40B6E0" stroke="#3C3F41"/><path d="M15 11H16.5V13H15" fill="none" stroke="#40B6E0"/></svg><div style="left:61px;top:542.33px;font:14px/normal 'Liberation Sans',sans-serif;color:#BBBBBB;white-space:pre;letter-spacing:-0.2px">&lt; 1.8 &gt;</div><div style="left:112.1925px;top:542.33px;font:14px/normal 'Liberation Sans',sans-serif;color:#8C8C8C;white-space:pre;letter-spacing:-0.2px">C:\Program Files\Java\jdk1.8.0_131</div><svg style="left:26px;top:565px" width="6" height="10" viewBox="0 0 6 10"><path d="M0.5 0.5L5 5L0.5 9.5" fill="none" stroke="#AFB1B3" stroke-width="1.1"/></svg><svg style="left:42px;top:562px" width="16" height="16" viewBox="0 0 16 16"><path d="M0 1H5L6.5 3H14V12H0Z" fill="#9AA7B0"/><rect x="6" y="6" width="10" height="10" fill="#3C3F41"/><path d="M7.5 10V16" stroke="#62B543" stroke-width="1.6"/><path d="M10.5 8V16M13.5 11V16" stroke="#40B6E0" stroke-width="1.6"/></svg><div style="left:61px;top:562.33px;font:14px/normal 'Liberation Sans',sans-serif;color:#BBBBBB;white-space:pre;letter-spacing:-0.2px">Maven: ch.qos.logback:logback-classic:1.2.3</div><svg style="left:26px;top:585px" width="6" height="10" viewBox="0 0 6 10"><path d="M0.5 0.5L5 5L0.5 9.5" fill="none" stroke="#AFB1B3" stroke-width="1.1"/></svg><svg style="left:42px;top:582px" width="16" height="16" viewBox="0 0 16 16"><path d="M0 1H5L6.5 3H14V12H0Z" fill="#9AA7B0"/><rect x="6" y="6" width="10" height="10" fill="#3C3F41"/><path d="M7.5 10V16" stroke="#62B543" stroke-width="1.6"/><path d="M10.5 8V16M13.5 11V16" stroke="#40B6E0" stroke-width="1.6"/></svg><div style="left:61px;top:582.33px;font:14px/normal 'Liberation Sans',sans-serif;color:#BBBBBB;white-space:pre;letter-spacing:-0.2px">Maven: ch.qos.logback:logback-core:1.2.3</div><svg style="left:26px;top:605px" width="6" height="10" viewBox="0 0 6 10"><path d="M0.5 0.5L5 5L0.5 9.5" fill="none" stroke="#AFB1B3" stroke-width="1.1"/></svg><svg style="left:42px;top:602px" width="16" height="16" viewBox="0 0 16 16"><path d="M0 1H5L6.5 3H14V12H0Z" fill="#9AA7B0"/><rect x="6" y="6" width="10" height="10" fill="#3C3F41"/><path d="M7.5 10V16" stroke="#62B543" stroke-width="1.6"/><path d="M10.5 8V16M13.5 11V16" stroke="#40B6E0" stroke-width="1.6"/></svg><div style="left:61px;top:602.33px;font:14px/normal 'Liberation Sans',sans-serif;color:#BBBBBB;white-space:pre;letter-spacing:-0.2px">Maven: com.fasterxml.jackson.core:jackson-annotations:2.11.2</div><svg style="left:26px;top:625px" width="6" height="10" viewBox="0 0 6 10"><path d="M0.5 0.5L5 5L0.5 9.5" fill="none" stroke="#AFB1B3" stroke-width="1.1"/></svg><svg style="left:42px;top:622px" width="16" height="16" viewBox="0 0 16 16"><path d="M0 1H5L6.5 3H14V12H0Z" fill="#9AA7B0"/><rect x="6" y="6" width="10" height="10" fill="#3C3F41"/><path d="M7.5 10V16" stroke="#62B543" stroke-width="1.6"/><path d="M10.5 8V16M13.5 11V16" stroke="#40B6E0" stroke-width="1.6"/></svg><div style="left:61px;top:622.33px;font:14px/normal 'Liberation Sans',sans-serif;color:#BBBBBB;white-space:pre;letter-spacing:-0.2px">Maven: com.fasterxml.jackson.core:jackson-core:2.11.2</div><svg style="left:26px;top:645px" width="6" height="10" viewBox="0 0 6 10"><path d="M0.5 0.5L5 5L0.5 9.5" fill="none" stroke="#AFB1B3" stroke-width="1.1"/></svg><svg style="left:42px;top:642px" width="16" height="16" viewBox="0 0 16 16"><path d="M0 1H5L6.5 3H14V12H0Z" fill="#9AA7B0"/><rect x="6" y="6" width="10" height="10" fill="#3C3F41"/><path d="M7.5 10V16" stroke="#62B543" stroke-width="1.6"/><path d="M10.5 8V16M13.5 11V16" stroke="#40B6E0" stroke-width="1.6"/></svg><div style="left:61px;top:642.33px;font:14px/normal 'Liberation Sans',sans-serif;color:#BBBBBB;white-space:pre;letter-spacing:-0.2px">Maven: com.fasterxml.jackson.core:jackson-databind:2.11.2</div><svg style="left:26px;top:665px" width="6" height="10" viewBox="0 0 6 10"><path d="M0.5 0.5L5 5L0.5 9.5" fill="none" stroke="#AFB1B3" stroke-width="1.1"/></svg><svg style="left:42px;top:662px" width="16" height="16" viewBox="0 0 16 16"><path d="M0 1H5L6.5 3H14V12H0Z" fill="#9AA7B0"/><rect x="6" y="6" width="10" height="10" fill="#3C3F41"/><path d="M7.5 10V16" stroke="#62B543" stroke-width="1.6"/><path d="M10.5 8V16M13.5 11V16" stroke="#40B6E0" stroke-width="1.6"/></svg><div style="left:61px;top:662.33px;font:14px/normal 'Liberation Sans',sans-serif;color:#BBBBBB;white-space:pre;letter-spacing:-0.2px">Maven: com.fasterxml.jackson.datatype:jackson-datatype-jdk8:2.11.2</div><svg style="left:26px;top:685px" width="6" height="10" viewBox="0 0 6 10"><path d="M0.5 0.5L5 5L0.5 9.5" fill="none" stroke="#AFB1B3" stroke-width="1.1"/></svg><svg style="left:42px;top:682px" width="16" height="16" viewBox="0 0 16 16"><path d="M0 1H5L6.5 3H14V12H0Z" fill="#9AA7B0"/><rect x="6" y="6" width="10" height="10" fill="#3C3F41"/><path d="M7.5 10V16" stroke="#62B543" stroke-width="1.6"/><path d="M10.5 8V16M13.5 11V16" stroke="#40B6E0" stroke-width="1.6"/></svg><div style="left:61px;top:682.33px;font:14px/normal 'Liberation Sans',sans-serif;color:#BBBBBB;white-space:pre;letter-spacing:-0.2px">Maven: com.fasterxml.jackson.datatype:jackson-datatype-jsr310:2.11.2</div><svg style="left:26px;top:705px" width="6" height="10" viewBox="0 0 6 10"><path d="M0.5 0.5L5 5L0.5 9.5" fill="none" stroke="#AFB1B3" stroke-width="1.1"/></svg><svg style="left:42px;top:702px" width="16" height="16" viewBox="0 0 16 16"><path d="M0 1H5L6.5 3H14V12H0Z" fill="#9AA7B0"/><rect x="6" y="6" width="10" height="10" fill="#3C3F41"/><path d="M7.5 10V16" stroke="#62B543" stroke-width="1.6"/><path d="M10.5 8V16M13.5 11V16" stroke="#40B6E0" stroke-width="1.6"/></svg><div style="left:61px;top:702.33px;font:14px/normal 'Liberation Sans',sans-serif;color:#BBBBBB;white-space:pre;letter-spacing:-0.2px">Maven: com.fasterxml.jackson.module:jackson-module-parameter-names:2.11.2</div><svg style="left:26px;top:725px" width="6" height="10" viewBox="0 0 6 10"><path d="M0.5 0.5L5 5L0.5 9.5" fill="none" stroke="#AFB1B3" stroke-width="1.1"/></svg><svg style="left:42px;top:722px" width="16" height="16" viewBox="0 0 16 16"><path d="M0 1H5L6.5 3H14V12H0Z" fill="#9AA7B0"/><rect x="6" y="6" width="10" height="10" fill="#3C3F41"/><path d="M7.5 10V16" stroke="#62B543" stroke-width="1.6"/><path d="M10.5 8V16M13.5 11V16" stroke="#40B6E0" stroke-width="1.6"/></svg><div style="left:61px;top:722.33px;font:14px/normal 'Liberation Sans',sans-serif;color:#BBBBBB;white-space:pre;letter-spacing:-0.2px">Maven: com.jayway.jsonpath:json-path:2.4.0</div><svg style="left:26px;top:745px" width="6" height="10" viewBox="0 0 6 10"><path d="M0.5 0.5L5 5L0.5 9.5" fill="none" stroke="#AFB1B3" stroke-width="1.1"/></svg><svg style="left:42px;top:742px" width="16" height="16" viewBox="0 0 16 16"><path d="M0 1H5L6.5 3H14V12H0Z" fill="#9AA7B0"/><rect x="6" y="6" width="10" height="10" fill="#3C3F41"/><path d="M7.5 10V16" stroke="#62B543" stroke-width="1.6"/><path d="M10.5 8V16M13.5 11V16" stroke="#40B6E0" stroke-width="1.6"/></svg><div style="left:61px;top:742.33px;font:14px/normal 'Liberation Sans',sans-serif;color:#BBBBBB;white-space:pre;letter-spacing:-0.2px">Maven: com.vaadin.external.google:android-json:0.0.20131108.vaadin1</div><svg style="left:26px;top:765px" width="6" height="10" viewBox="0 0 6 10"><path d="M0.5 0.5L5 5L0.5 9.5" fill="none" stroke="#AFB1B3" stroke-width="1.1"/></svg><svg style="left:42px;top:762px" width="16" height="16" viewBox="0 0 16 16"><path d="M0 1H5L6.5 3H14V12H0Z" fill="#9AA7B0"/><rect x="6" y="6" width="10" height="10" fill="#3C3F41"/><path d="M7.5 10V16" stroke="#62B543" stroke-width="1.6"/><path d="M10.5 8V16M13.5 11V16" stroke="#40B6E0" stroke-width="1.6"/></svg><div style="left:61px;top:762.33px;font:14px/normal 'Liberation Sans',sans-serif;color:#BBBBBB;white-space:pre;letter-spacing:-0.2px">Maven: jakarta.activation:jakarta.activation-api:1.2.2</div><svg style="left:26px;top:785px" width="6" height="10" viewBox="0 0 6 10"><path d="M0.5 0.5L5 5L0.5 9.5" fill="none" stroke="#AFB1B3" stroke-width="1.1"/></svg><svg style="left:42px;top:782px" width="16" height="16" viewBox="0 0 16 16"><path d="M0 1H5L6.5 3H14V12H0Z" fill="#9AA7B0"/><rect x="6" y="6" width="10" height="10" fill="#3C3F41"/><path d="M7.5 10V16" stroke="#62B543" stroke-width="1.6"/><path d="M10.5 8V16M13.5 11V16" stroke="#40B6E0" stroke-width="1.6"/></svg><div style="left:61px;top:782.33px;font:14px/normal 'Liberation Sans',sans-serif;color:#BBBBBB;white-space:pre;letter-spacing:-0.2px">Maven: jakarta.annotation:jakarta.annotation-api:1.3.5</div><svg style="left:26px;top:805px" width="6" height="10" viewBox="0 0 6 10"><path d="M0.5 0.5L5 5L0.5 9.5" fill="none" stroke="#AFB1B3" stroke-width="1.1"/></svg><svg style="left:42px;top:802px" width="16" height="16" viewBox="0 0 16 16"><path d="M0 1H5L6.5 3H14V12H0Z" fill="#9AA7B0"/><rect x="6" y="6" width="10" height="10" fill="#3C3F41"/><path d="M7.5 10V16" stroke="#62B543" stroke-width="1.6"/><path d="M10.5 8V16M13.5 11V16" stroke="#40B6E0" stroke-width="1.6"/></svg><div style="left:61px;top:802.33px;font:14px/normal 'Liberation Sans',sans-serif;color:#BBBBBB;white-space:pre;letter-spacing:-0.2px">Maven: jakarta.xml.bind:jakarta.xml.bind-api:2.3.3</div><svg style="left:26px;top:825px" width="6" height="10" viewBox="0 0 6 10"><path d="M0.5 0.5L5 5L0.5 9.5" fill="none" stroke="#AFB1B3" stroke-width="1.1"/></svg><svg style="left:42px;top:822px" width="16" height="16" viewBox="0 0 16 16"><path d="M0 1H5L6.5 3H14V12H0Z" fill="#9AA7B0"/><rect x="6" y="6" width="10" height="10" fill="#3C3F41"/><path d="M7.5 10V16" stroke="#62B543" stroke-width="1.6"/><path d="M10.5 8V16M13.5 11V16" stroke="#40B6E0" stroke-width="1.6"/></svg><div style="left:61px;top:822.33px;font:14px/normal 'Liberation Sans',sans-serif;color:#BBBBBB;white-space:pre;letter-spacing:-0.2px">Maven: junit:junit:4.13</div><svg style="left:26px;top:845px" width="6" height="10" viewBox="0 0 6 10"><path d="M0.5 0.5L5 5L0.5 9.5" fill="none" stroke="#AFB1B3" stroke-width="1.1"/></svg><svg style="left:42px;top:842px" width="16" height="16" viewBox="0 0 16 16"><path d="M0 1H5L6.5 3H14V12H0Z" fill="#9AA7B0"/><rect x="6" y="6" width="10" height="10" fill="#3C3F41"/><path d="M7.5 10V16" stroke="#62B543" stroke-width="1.6"/><path d="M10.5 8V16M13.5 11V16" stroke="#40B6E0" stroke-width="1.6"/></svg><div style="left:61px;top:842.33px;font:14px/normal 'Liberation Sans',sans-serif;color:#BBBBBB;white-space:pre;letter-spacing:-0.2px">Maven: net.bytebuddy:byte-buddy:1.10.14</div><svg style="left:26px;top:865px" width="6" height="10" viewBox="0 0 6 10"><path d="M0.5 0.5L5 5L0.5 9.5" fill="none" stroke="#AFB1B3" stroke-width="1.1"/></svg><svg style="left:42px;top:862px" width="16" height="16" viewBox="0 0 16 16"><path d="M0 1H5L6.5 3H14V12H0Z" fill="#9AA7B0"/><rect x="6" y="6" width="10" height="10" fill="#3C3F41"/><path d="M7.5 10V16" stroke="#62B543" stroke-width="1.6"/><path d="M10.5 8V16M13.5 11V16" stroke="#40B6E0" stroke-width="1.6"/></svg><div style="left:61px;top:862.33px;font:14px/normal 'Liberation Sans',sans-serif;color:#BBBBBB;white-space:pre;letter-spacing:-0.2px">Maven: net.bytebuddy:byte-buddy-agent:1.10.14</div><svg style="left:26px;top:885px" width="6" height="10" viewBox="0 0 6 10"><path d="M0.5 0.5L5 5L0.5 9.5" fill="none" stroke="#AFB1B3" stroke-width="1.1"/></svg><svg style="left:42px;top:882px" width="16" height="16" viewBox="0 0 16 16"><path d="M0 1H5L6.5 3H14V12H0Z" fill="#9AA7B0"/><rect x="6" y="6" width="10" height="10" fill="#3C3F41"/><path d="M7.5 10V16" stroke="#62B543" stroke-width="1.6"/><path d="M10.5 8V16M13.5 11V16" stroke="#40B6E0" stroke-width="1.6"/></svg><div style="left:61px;top:882.33px;font:14px/normal 'Liberation Sans',sans-serif;color:#BBBBBB;white-space:pre;letter-spacing:-0.2px">Maven: net.minidev:accessors-smart:1.2</div><svg style="left:26px;top:905px" width="6" height="10" viewBox="0 0 6 10"><path d="M0.5 0.5L5 5L0.5 9.5" fill="none" stroke="#AFB1B3" stroke-width="1.1"/></svg><svg style="left:42px;top:902px" width="16" height="16" viewBox="0 0 16 16"><path d="M0 1H5L6.5 3H14V12H0Z" fill="#9AA7B0"/><rect x="6" y="6" width="10" height="10" fill="#3C3F41"/><path d="M7.5 10V16" stroke="#62B543" stroke-width="1.6"/><path d="M10.5 8V16M13.5 11V16" stroke="#40B6E0" stroke-width="1.6"/></svg><div style="left:61px;top:902.33px;font:14px/normal 'Liberation Sans',sans-serif;color:#BBBBBB;white-space:pre;letter-spacing:-0.2px">Maven: net.minidev:json-smart:2.3</div><div style="left:373px;top:2px;width:8px;height:194px;background:#55585A;border-radius:1px"></div><div style="left:1px;top:903px;width:245px;height:7px;background:#56595B"></div></div>
<div style="left:485px;top:733px;width:1412px;height:24px;background:#323232;"></div>
<div style="left:410px;top:113.68px;font:13px/normal 'Liberation Mono',monospace;color:#606366;white-space:pre;letter-spacing:0.4px">40</div>
<div style="left:410px;top:137.68px;font:13px/normal 'Liberation Mono',monospace;color:#606366;white-space:pre;letter-spacing:0.4px">41</div>
<div style="left:410px;top:161.68px;font:13px/normal 'Liberation Mono',monospace;color:#606366;white-space:pre;letter-spacing:0.4px">42</div>
<div style="left:410px;top:185.68px;font:13px/normal 'Liberation Mono',monospace;color:#606366;white-space:pre;letter-spacing:0.4px">43</div>
<div style="left:410px;top:209.68px;font:13px/normal 'Liberation Mono',monospace;color:#606366;white-space:pre;letter-spacing:0.4px">44</div>
<div style="left:410px;top:233.68px;font:13px/normal 'Liberation Mono',monospace;color:#606366;white-space:pre;letter-spacing:0.4px">45</div>
<div style="left:410px;top:257.68px;font:13px/normal 'Liberation Mono',monospace;color:#606366;white-space:pre;letter-spacing:0.4px">46</div>
<div style="left:410px;top:281.68px;font:13px/normal 'Liberation Mono',monospace;color:#606366;white-space:pre;letter-spacing:0.4px">47</div>
<div style="left:410px;top:305.68px;font:13px/normal 'Liberation Mono',monospace;color:#606366;white-space:pre;letter-spacing:0.4px">48</div>
<div style="left:410px;top:329.68px;font:13px/normal 'Liberation Mono',monospace;color:#606366;white-space:pre;letter-spacing:0.4px">49</div>
<div style="left:410px;top:353.68px;font:13px/normal 'Liberation Mono',monospace;color:#606366;white-space:pre;letter-spacing:0.4px">50</div>
<div style="left:410px;top:377.68px;font:13px/normal 'Liberation Mono',monospace;color:#606366;white-space:pre;letter-spacing:0.4px">51</div>
<div style="left:410px;top:401.68px;font:13px/normal 'Liberation Mono',monospace;color:#606366;white-space:pre;letter-spacing:0.4px">52</div>
<div style="left:410px;top:425.68px;font:13px/normal 'Liberation Mono',monospace;color:#606366;white-space:pre;letter-spacing:0.4px">53</div>
<div style="left:410px;top:449.68px;font:13px/normal 'Liberation Mono',monospace;color:#606366;white-space:pre;letter-spacing:0.4px">54</div>
<div style="left:410px;top:473.68px;font:13px/normal 'Liberation Mono',monospace;color:#606366;white-space:pre;letter-spacing:0.4px">55</div>
<div style="left:410px;top:497.68px;font:13px/normal 'Liberation Mono',monospace;color:#606366;white-space:pre;letter-spacing:0.4px">56</div>
<div style="left:410px;top:521.68px;font:13px/normal 'Liberation Mono',monospace;color:#606366;white-space:pre;letter-spacing:0.4px">57</div>
<div style="left:410px;top:545.68px;font:13px/normal 'Liberation Mono',monospace;color:#606366;white-space:pre;letter-spacing:0.4px">58</div>
<div style="left:410px;top:569.68px;font:13px/normal 'Liberation Mono',monospace;color:#606366;white-space:pre;letter-spacing:0.4px">59</div>
<div style="left:410px;top:593.68px;font:13px/normal 'Liberation Mono',monospace;color:#606366;white-space:pre;letter-spacing:0.4px">60</div>
<div style="left:410px;top:617.68px;font:13px/normal 'Liberation Mono',monospace;color:#606366;white-space:pre;letter-spacing:0.4px">61</div>
<div style="left:410px;top:641.68px;font:13px/normal 'Liberation Mono',monospace;color:#606366;white-space:pre;letter-spacing:0.4px">62</div>
<div style="left:410px;top:665.68px;font:13px/normal 'Liberation Mono',monospace;color:#606366;white-space:pre;letter-spacing:0.4px">63</div>
<div style="left:410px;top:689.68px;font:13px/normal 'Liberation Mono',monospace;color:#606366;white-space:pre;letter-spacing:0.4px">64</div>
<div style="left:410px;top:713.68px;font:13px/normal 'Liberation Mono',monospace;color:#606366;white-space:pre;letter-spacing:0.4px">65</div>
<div style="left:410px;top:737.68px;font:13px/normal 'Liberation Mono',monospace;color:#A4A3A3;white-space:pre;letter-spacing:0.4px">66</div>
<div style="left:410px;top:761.68px;font:13px/normal 'Liberation Mono',monospace;color:#606366;white-space:pre;letter-spacing:0.4px">67</div>
<div style="left:410px;top:785.68px;font:13px/normal 'Liberation Mono',monospace;color:#606366;white-space:pre;letter-spacing:0.4px">68</div>
<div style="left:410px;top:809.68px;font:13px/normal 'Liberation Mono',monospace;color:#606366;white-space:pre;letter-spacing:0.4px">69</div>
<div style="left:410px;top:833.68px;font:13px/normal 'Liberation Mono',monospace;color:#606366;white-space:pre;letter-spacing:0.4px">70</div>
<div style="left:410px;top:857.68px;font:13px/normal 'Liberation Mono',monospace;color:#606366;white-space:pre;letter-spacing:0.4px">71</div>
<div style="left:482px;top:112px;width:1px;height:885px;background:#585A5C;"></div>
<svg style="left:477px;top:259px;" width="11" height="13" viewBox="0 0 11 13"><path d="M0.5 0.5H10.5V7L5.5 12L0.5 7Z" fill="#313335" stroke="#6C6E70"/><path d="M3 4.5H8" stroke="#6C6E70"/></svg>
<svg style="left:477px;top:355px;" width="11" height="13" viewBox="0 0 11 13"><path d="M0.5 0.5H10.5V7L5.5 12L0.5 7Z" fill="#313335" stroke="#6C6E70"/><path d="M3 4.5H8" stroke="#6C6E70"/></svg>
<svg style="left:477px;top:547px;" width="11" height="13" viewBox="0 0 11 13"><path d="M0.5 0.5H10.5V7L5.5 12L0.5 7Z" fill="#313335" stroke="#6C6E70"/><path d="M3 4.5H8" stroke="#6C6E70"/></svg>
<svg style="left:477px;top:667px;" width="11" height="13" viewBox="0 0 11 13"><path d="M0.5 0.5H10.5V7L5.5 12L0.5 7Z" fill="#313335" stroke="#6C6E70"/><path d="M3 4.5H8" stroke="#6C6E70"/></svg>
<svg style="left:477px;top:210px;" width="11" height="13" viewBox="0 0 11 13"><path d="M0.5 12.5H10.5V6L5.5 0.5L0.5 6Z" fill="#313335" stroke="#6C6E70"/><path d="M3 8.5H8" stroke="#6C6E70"/></svg>
<svg style="left:477px;top:306px;" width="11" height="13" viewBox="0 0 11 13"><path d="M0.5 12.5H10.5V6L5.5 0.5L0.5 6Z" fill="#313335" stroke="#6C6E70"/><path d="M3 8.5H8" stroke="#6C6E70"/></svg>
<svg style="left:477px;top:474px;" width="11" height="13" viewBox="0 0 11 13"><path d="M0.5 12.5H10.5V6L5.5 0.5L0.5 6Z" fill="#313335" stroke="#6C6E70"/><path d="M3 8.5H8" stroke="#6C6E70"/></svg>
<svg style="left:477px;top:594px;" width="11" height="13" viewBox="0 0 11 13"><path d="M0.5 12.5H10.5V6L5.5 0.5L0.5 6Z" fill="#313335" stroke="#6C6E70"/><path d="M3 8.5H8" stroke="#6C6E70"/></svg>
<svg style="left:477px;top:786px;" width="11" height="13" viewBox="0 0 11 13"><path d="M0.5 12.5H10.5V6L5.5 0.5L0.5 6Z" fill="#313335" stroke="#6C6E70"/><path d="M3 8.5H8" stroke="#6C6E70"/></svg>
<svg style="left:432px;top:352px;" width="17" height="17" viewBox="0 0 17 17"><circle cx="7.3" cy="8" r="7.3" fill="#5AA041"/><path d="M0.5 1.5L8 9" stroke="#313335" stroke-width="1.3"/><circle cx="10.8" cy="11.3" r="5.2" fill="#313335"/><circle cx="10.8" cy="11.3" r="4.5" fill="#A8B3BC"/><path d="M8.5 9.5L9.5 12L11 13M11 7.5L12 9.5L13.5 10.5L13 13" stroke="#2B2B2B" stroke-width="1.1" fill="none"/></svg>
<svg style="left:432px;top:640px;" width="17" height="17" viewBox="0 0 17 17"><circle cx="7.3" cy="8" r="7.3" fill="#5AA041"/><path d="M0.5 1.5L8 9" stroke="#313335" stroke-width="1.3"/><circle cx="10.8" cy="11.3" r="5.2" fill="#313335"/><circle cx="10.8" cy="11.3" r="4.5" fill="#A8B3BC"/><path d="M8.5 9.5L9.5 12L11 13M11 7.5L12 9.5L13.5 10.5L13 13" stroke="#2B2B2B" stroke-width="1.1" fill="none"/></svg>
<div style="left:452px;top:640.42px;font:15px/normal 'Liberation Sans',sans-serif;color:#AFB1B3;white-space:pre;">@</div>
<div style="left:489px;top:113px;height:24px;font:14px/18px 'Liberation Mono',monospace;letter-spacing:-0.401px;white-space:pre;-webkit-text-stroke:0.25px currentColor"><span style="color:#A9B7C6">        Map&lt;String</span><span style="color:#CC7832">,</span><span style="color:#A9B7C6"> Object&gt; map = </span><span style="color:#CC7832">new</span><span style="color:#A9B7C6"> HashMap&lt;&gt;()</span><span style="color:#CC7832">;</span></div>
<div style="left:489px;top:137px;height:24px;font:14px/18px 'Liberation Mono',monospace;letter-spacing:-0.401px;white-space:pre;-webkit-text-stroke:0.25px currentColor"><span style="color:#A9B7C6">        map.put(</span><span style="color:#6A8759">"userAgent"</span><span style="color:#CC7832">,</span><span style="color:#A9B7C6"> userAgent)</span><span style="color:#CC7832">;</span></div>
<div style="left:489px;top:161px;height:24px;font:14px/18px 'Liberation Mono',monospace;letter-spacing:-0.401px;white-space:pre;-webkit-text-stroke:0.25px currentColor"><span style="color:#A9B7C6">        map.put(</span><span style="color:#6A8759">"header"</span><span style="color:#CC7832">,</span><span style="color:#A9B7C6"> header)</span><span style="color:#CC7832">;</span></div>
<div style="left:489px;top:185px;height:24px;font:14px/18px 'Liberation Mono',monospace;letter-spacing:-0.401px;white-space:pre;-webkit-text-stroke:0.25px currentColor"><span style="color:#A9B7C6">        </span><span style="color:#CC7832">return</span><span style="color:#A9B7C6"> map</span><span style="color:#CC7832">;</span></div>
<div style="left:489px;top:209px;height:24px;font:14px/18px 'Liberation Mono',monospace;letter-spacing:-0.401px;white-space:pre;-webkit-text-stroke:0.25px currentColor"><span style="color:#A9B7C6">    }</span></div>
<div style="left:489px;top:257px;height:24px;font:14px/18px 'Liberation Mono',monospace;letter-spacing:-0.401px;white-space:pre;-webkit-text-stroke:0.25px currentColor"><span style="color:#629755;font-style:italic;-webkit-text-stroke:0">    /<span style="display:inline-block;font-style:normal;font-weight:bold;transform:translateY(2px) scale(1.2)">*</span><span style="display:inline-block;font-style:normal;font-weight:bold;transform:translateY(2px) scale(1.2)">*</span></span></div>
<div style="left:489px;top:281px;height:24px;font:14px/18px 'Liberation Mono',monospace;letter-spacing:-0.401px;white-space:pre;-webkit-text-stroke:0.25px currentColor"><span style="color:#629755;font-style:italic;-webkit-text-stroke:0">     <span style="display:inline-block;font-style:normal;font-weight:bold;transform:translateY(2px) scale(1.2)">*</span> 获取拼接的请求参数</span></div>
<div style="left:489px;top:305px;height:24px;font:14px/18px 'Liberation Mono',monospace;letter-spacing:-0.401px;white-space:pre;-webkit-text-stroke:0.25px currentColor"><span style="color:#629755;font-style:italic;-webkit-text-stroke:0">     <span style="display:inline-block;font-style:normal;font-weight:bold;transform:translateY(2px) scale(1.2)">*</span>/</span></div>
<div style="left:489px;top:329px;height:24px;font:14px/18px 'Liberation Mono',monospace;letter-spacing:-0.401px;white-space:pre;-webkit-text-stroke:0.25px currentColor"><span style="color:#BBB529">    @GetMapping</span><span style="color:#A9B7C6">(</span><span style="display:inline-block;width:23px;height:14px;vertical-align:-2px;background:#353535;border-radius:4px;position:relative;-webkit-text-stroke:0"><svg style="position:absolute;left:1px;top:1.5px" width="22" height="12" viewBox="0 0 22 12"><circle cx="5.5" cy="5.5" r="4.8" fill="none" stroke="#868C92" stroke-width="1.3"/><path d="M1.5 4.5L4 5.5L3.5 8.5L5 10M6.5 1L7 3.5L9.5 4.5L9 7" stroke="#868C92" stroke-width="1.6" fill="none"/><path d="M13.5 4L16.5 7L19.5 4" stroke="#868C92" fill="none" stroke-width="1.2"/></svg></span><span style="color:#6A8759">"</span><span style="color:#6A8759;text-decoration:underline;text-decoration-color:#7F8A96;text-underline-offset:3px">/info</span><span style="color:#6A8759">"</span><span style="color:#A9B7C6">)</span></div>
<div style="left:489px;top:353px;height:24px;font:14px/18px 'Liberation Mono',monospace;letter-spacing:-0.401px;white-space:pre;-webkit-text-stroke:0.25px currentColor"><span style="color:#A9B7C6">    </span><span style="color:#CC7832">public</span><span style="color:#A9B7C6"> Map&lt;String</span><span style="color:#CC7832">,</span><span style="color:#A9B7C6"> Object&gt; </span><span style="color:#FFC66D">getInfo</span><span style="color:#A9B7C6">(</span><span style="color:#BBB529">@RequestParam</span><span style="color:#A9B7C6">(</span><span style="color:#6A8759">"</span><span style="color:#6A8759;text-decoration:underline;text-decoration-color:#7F8A96;text-underline-offset:3px">age</span><span style="color:#6A8759">"</span><span style="color:#A9B7C6">) Integer age</span><span style="color:#CC7832">,</span><span style="color:#A9B7C6"> </span><span style="color:#BBB529">@RequestParam</span><span style="color:#A9B7C6">(</span><span style="color:#6A8759">"</span><span style="color:#6A8759;text-decoration:underline;text-decoration-color:#7F8A96;text-underline-offset:3px">name</span><span style="color:#6A8759">"</span><span style="color:#A9B7C6">) String name) {</span></div>
<div style="left:489px;top:377px;height:24px;font:14px/18px 'Liberation Mono',monospace;letter-spacing:-0.401px;white-space:pre;-webkit-text-stroke:0.25px currentColor"><span style="color:#A9B7C6">        Map&lt;String</span><span style="color:#CC7832">,</span><span style="color:#A9B7C6"> Object&gt; map = </span><span style="color:#CC7832">new</span><span style="color:#A9B7C6"> HashMap&lt;&gt;()</span><span style="color:#CC7832">;</span></div>
<div style="left:489px;top:401px;height:24px;font:14px/18px 'Liberation Mono',monospace;letter-spacing:-0.401px;white-space:pre;-webkit-text-stroke:0.25px currentColor"><span style="color:#A9B7C6">        map.put(</span><span style="color:#6A8759">"age"</span><span style="color:#CC7832">,</span><span style="color:#A9B7C6"> age)</span><span style="color:#CC7832">;</span></div>
<div style="left:489px;top:425px;height:24px;font:14px/18px 'Liberation Mono',monospace;letter-spacing:-0.401px;white-space:pre;-webkit-text-stroke:0.25px currentColor"><span style="color:#A9B7C6">        map.put(</span><span style="color:#6A8759">"name"</span><span style="color:#CC7832">,</span><span style="color:#A9B7C6"> name)</span><span style="color:#CC7832">;</span></div>
<div style="left:489px;top:449px;height:24px;font:14px/18px 'Liberation Mono',monospace;letter-spacing:-0.401px;white-space:pre;-webkit-text-stroke:0.25px currentColor"><span style="color:#A9B7C6">        </span><span style="color:#CC7832">return</span><span style="color:#A9B7C6"> map</span><span style="color:#CC7832">;</span></div>
<div style="left:489px;top:473px;height:24px;font:14px/18px 'Liberation Mono',monospace;letter-spacing:-0.401px;white-space:pre;-webkit-text-stroke:0.25px currentColor"><span style="color:#A9B7C6">    }</span></div>
<div style="left:489px;top:545px;height:24px;font:14px/18px 'Liberation Mono',monospace;letter-spacing:-0.401px;white-space:pre;-webkit-text-stroke:0.25px currentColor"><span style="color:#629755;font-style:italic;-webkit-text-stroke:0">    /<span style="display:inline-block;font-style:normal;font-weight:bold;transform:translateY(2px) scale(1.2)">*</span><span style="display:inline-block;font-style:normal;font-weight:bold;transform:translateY(2px) scale(1.2)">*</span></span></div>
<div style="left:489px;top:569px;height:24px;font:14px/18px 'Liberation Mono',monospace;letter-spacing:-0.401px;white-space:pre;-webkit-text-stroke:0.25px currentColor"><span style="color:#629755;font-style:italic;-webkit-text-stroke:0">     <span style="display:inline-block;font-style:normal;font-weight:bold;transform:translateY(2px) scale(1.2)">*</span> 获取cookie的值</span></div>
<div style="left:489px;top:593px;height:24px;font:14px/18px 'Liberation Mono',monospace;letter-spacing:-0.401px;white-space:pre;-webkit-text-stroke:0.25px currentColor"><span style="color:#629755;font-style:italic;-webkit-text-stroke:0">     <span style="display:inline-block;font-style:normal;font-weight:bold;transform:translateY(2px) scale(1.2)">*</span>/</span></div>
<div style="left:489px;top:617px;height:24px;font:14px/18px 'Liberation Mono',monospace;letter-spacing:-0.401px;white-space:pre;-webkit-text-stroke:0.25px currentColor"><span style="color:#BBB529">    @GetMapping</span><span style="color:#A9B7C6">(</span><span style="display:inline-block;width:23px;height:14px;vertical-align:-2px;background:#353535;border-radius:4px;position:relative;-webkit-text-stroke:0"><svg style="position:absolute;left:1px;top:1.5px" width="22" height="12" viewBox="0 0 22 12"><circle cx="5.5" cy="5.5" r="4.8" fill="none" stroke="#868C92" stroke-width="1.3"/><path d="M1.5 4.5L4 5.5L3.5 8.5L5 10M6.5 1L7 3.5L9.5 4.5L9 7" stroke="#868C92" stroke-width="1.6" fill="none"/><path d="M13.5 4L16.5 7L19.5 4" stroke="#868C92" fill="none" stroke-width="1.2"/></svg></span><span style="color:#6A8759">"</span><span style="color:#6A8759;text-decoration:underline;text-decoration-color:#7F8A96;text-underline-offset:3px">/cookie</span><span style="color:#6A8759">"</span><span style="color:#A9B7C6">)</span></div>
<div style="left:489px;top:641px;height:24px;font:14px/18px 'Liberation Mono',monospace;letter-spacing:-0.401px;white-space:pre;-webkit-text-stroke:0.25px currentColor"><span style="color:#A9B7C6">    </span><span style="color:#CC7832">public</span><span style="color:#A9B7C6"> Map&lt;String</span><span style="color:#CC7832">,</span><span style="color:#A9B7C6"> Object&gt; </span><span style="color:#FFC66D">getCookie</span><span style="color:#A9B7C6">(</span><span style="color:#BBB529">@CookieValue</span><span style="color:#A9B7C6">(</span><span style="color:#6A8759">"_ga"</span><span style="color:#A9B7C6">) String _ga</span><span style="color:#CC7832">,</span></div>
<div style="left:489px;top:665px;height:24px;font:14px/18px 'Liberation Mono',monospace;letter-spacing:-0.401px;white-space:pre;-webkit-text-stroke:0.25px currentColor"><span style="color:#A9B7C6">                                         </span><span style="color:#BBB529">@CookieValue</span><span style="color:#A9B7C6">(</span><span style="color:#6A8759">"_ga"</span><span style="color:#A9B7C6">) Cookie cookie) {</span></div>
<div style="left:489px;top:689px;height:24px;font:14px/18px 'Liberation Mono',monospace;letter-spacing:-0.401px;white-space:pre;-webkit-text-stroke:0.25px currentColor"><span style="color:#A9B7C6">        Map&lt;String</span><span style="color:#CC7832">,</span><span style="color:#A9B7C6"> Object&gt; map = </span><span style="color:#CC7832">new</span><span style="color:#A9B7C6"> HashMap&lt;&gt;()</span><span style="color:#CC7832">;</span></div>
<div style="left:489px;top:713px;height:24px;font:14px/18px 'Liberation Mono',monospace;letter-spacing:-0.401px;white-space:pre;-webkit-text-stroke:0.25px currentColor"><span style="color:#A9B7C6">        map.put(</span><span style="color:#6A8759">"_ga"</span><span style="color:#CC7832">,</span><span style="color:#A9B7C6"> _ga)</span><span style="color:#CC7832">;</span></div>
<div style="left:489px;top:737px;height:24px;font:14px/18px 'Liberation Mono',monospace;letter-spacing:-0.401px;white-space:pre;-webkit-text-stroke:0.25px currentColor"><span style="color:#A9B7C6">        cookie.get</span></div>
<div style="left:632px;top:735px;width:2px;height:20px;background:#BBBBBB;"></div>
<div style="left:489px;top:761px;height:24px;font:14px/18px 'Liberation Mono',monospace;letter-spacing:-0.401px;white-space:pre;-webkit-text-stroke:0.25px currentColor"><span style="color:#A9B7C6">        </span><span style="color:#CC7832">return</span><span style="color:#A9B7C6"> map</span><span style="color:#CC7832">;</span></div>
<div style="left:489px;top:785px;height:24px;font:14px/18px 'Liberation Mono',monospace;letter-spacing:-0.401px;white-space:pre;-webkit-text-stroke:0.25px currentColor"><span style="color:#A9B7C6">    }</span></div>
<div style="left:489px;top:833px;height:24px;font:14px/18px 'Liberation Mono',monospace;letter-spacing:-0.401px;white-space:pre;-webkit-text-stroke:0.25px currentColor"><span style="color:#A9B7C6">}</span></div>
<div style="left:519px;top:112px;width:1px;height:93px;background:#393939;"></div>
<div style="left:519px;top:373px;width:1px;height:96px;background:#393939;"></div>
<div style="left:519px;top:661px;width:1px;height:120px;background:#393939;"></div>
<div style="left:1449px;top:112px;width:1px;height:885px;background:#3A3A3A;"></div>
<svg style="left:1827px;top:120px;" width="12" height="11" viewBox="0 0 12 11"><path d="M6 0.5L11.5 10.5H0.5Z" fill="#A08A2C"/><path d="M6 3.5V6.8M6 8V9.4" stroke="#2B2B2B" stroke-width="1.3"/></svg>
<div style="left:1842.5px;top:118.78px;font:13.5px/normal 'Liberation Sans',sans-serif;color:#9A9A9A;white-space:pre;">6</div>
<svg style="left:1859px;top:122px;" width="11" height="7" viewBox="0 0 11 7"><path d="M1 6L5.5 1.5L10 6" fill="none" stroke="#AFB1B3" stroke-width="1.4"/></svg>
<svg style="left:1881px;top:122px;" width="11" height="7" viewBox="0 0 11 7"><path d="M1 1L5.5 5.5L10 1" fill="none" stroke="#AFB1B3" stroke-width="1.4"/></svg>
<div style="left:1884px;top:218px;width:14px;height:2px;background:#BE9117;"></div>
<div style="left:1884px;top:274px;width:14px;height:2px;background:#BE9117;"></div>
<div style="left:1884px;top:285px;width:14px;height:2px;background:#BE9117;"></div>
<div style="left:1884px;top:297px;width:14px;height:2px;background:#BE9117;"></div>
<div style="left:1884px;top:421px;width:14px;height:2px;background:#BE9117;"></div>
<div style="left:1887px;top:582px;width:10px;height:413px;background:#4B4D4F;border-radius:1px"></div>
<div style="left:486px;top:540px;width:941px;height:447px;border:3px solid #FF3838"></div>
<div class="clip" style="left:581px;top:756px;width:515px;height:225px"><div style="left:0;top:0;width:515px;height:225px;background:#46484A;box-shadow:inset 0 0 0 1px #56585A"></div><div style="left:1px;top:1px;width:513px;height:22px;background:#52565A"></div><svg style="left:8px;top:5px" width="14" height="14" viewBox="0 0 14 14"><circle cx="7" cy="7" r="7" fill="#C07A8A"/><path d="M3.5 10V5.2M3.5 6.6Q3.5 4.6 5.2 4.6Q7 4.6 7 6.6V10M7 6.6Q7 4.6 8.8 4.6Q10.5 4.6 10.5 6.6V10" fill="none" stroke="#3A2428" stroke-width="1.1"/></svg><div style="left:27px;top:4px;font:14px/18px 'Liberation Mono',monospace;letter-spacing:-0.401px;white-space:pre"><span style="color:#589DF6;font-weight:bold">get</span><span style="color:#BBBBBB;font-weight:bold">Name</span><span style="color:#8C8C8C;-webkit-text-stroke:0">()</span></div><div style="left:455px;top:4px;font:14px/18px 'Liberation Mono',monospace;letter-spacing:-0.401px;white-space:pre;color:#8C8C8C">String</div><svg style="left:8px;top:27px" width="14" height="14" viewBox="0 0 14 14"><circle cx="7" cy="7" r="7" fill="#C07A8A"/><path d="M3.5 10V5.2M3.5 6.6Q3.5 4.6 5.2 4.6Q7 4.6 7 6.6V10M7 6.6Q7 4.6 8.8 4.6Q10.5 4.6 10.5 6.6V10" fill="none" stroke="#3A2428" stroke-width="1.1"/></svg><div style="left:27px;top:26px;font:14px/18px 'Liberation Mono',monospace;letter-spacing:-0.401px;white-space:pre"><span style="color:#589DF6;font-weight:bold">get</span><span style="color:#BBBBBB;font-weight:bold">Path</span><span style="color:#8C8C8C;-webkit-text-stroke:0">()</span></div><div style="left:455px;top:26px;font:14px/18px 'Liberation Mono',monospace;letter-spacing:-0.401px;white-space:pre;color:#8C8C8C">String</div><svg style="left:8px;top:49px" width="14" height="14" viewBox="0 0 14 14"><circle cx="7" cy="7" r="7" fill="#C07A8A"/><path d="M3.5 10V5.2M3.5 6.6Q3.5 4.6 5.2 4.6Q7 4.6 7 6.6V10M7 6.6Q7 4.6 8.8 4.6Q10.5 4.6 10.5 6.6V10" fill="none" stroke="#3A2428" stroke-width="1.1"/></svg><div style="left:27px;top:48px;font:14px/18px 'Liberation Mono',monospace;letter-spacing:-0.401px;white-space:pre"><span style="color:#589DF6;font-weight:bold">get</span><span style="color:#BBBBBB;font-weight:bold">Comment</span><span style="color:#8C8C8C;-webkit-text-stroke:0">()</span></div><div style="left:455px;top:48px;font:14px/18px 'Liberation Mono',monospace;letter-spacing:-0.401px;white-space:pre;color:#8C8C8C">String</div><svg style="left:8px;top:71px" width="14" height="14" viewBox="0 0 14 14"><circle cx="7" cy="7" r="7" fill="#C07A8A"/><path d="M3.5 10V5.2M3.5 6.6Q3.5 4.6 5.2 4.6Q7 4.6 7 6.6V10M7 6.6Q7 4.6 8.8 4.6Q10.5 4.6 10.5 6.6V10" fill="none" stroke="#3A2428" stroke-width="1.1"/></svg><div style="left:27px;top:70px;font:14px/18px 'Liberation Mono',monospace;letter-spacing:-0.401px;white-space:pre"><span style="color:#589DF6;font-weight:bold">get</span><span style="color:#BBBBBB;font-weight:bold">Domain</span><span style="color:#8C8C8C;-webkit-text-stroke:0">()</span></div><div style="left:455px;top:70px;font:14px/18px 'Liberation Mono',monospace;letter-spacing:-0.401px;white-space:pre;color:#8C8C8C">String</div><svg style="left:8px;top:93px" width="14" height="14" viewBox="0 0 14 14"><circle cx="7" cy="7" r="7" fill="#C07A8A"/><path d="M3.5 10V5.2M3.5 6.6Q3.5 4.6 5.2 4.6Q7 4.6 7 6.6V10M7 6.6Q7 4.6 8.8 4.6Q10.5 4.6 10.5 6.6V10" fill="none" stroke="#3A2428" stroke-width="1.1"/></svg><div style="left:27px;top:92px;font:14px/18px 'Liberation Mono',monospace;letter-spacing:-0.401px;white-space:pre"><span style="color:#589DF6;font-weight:bold">get</span><span style="color:#BBBBBB;font-weight:bold">MaxAge</span><span style="color:#8C8C8C;-webkit-text-stroke:0">()</span></div><div style="left:479px;top:92px;font:14px/18px 'Liberation Mono',monospace;letter-spacing:-0.401px;white-space:pre;color:#8C8C8C">int</div><svg style="left:8px;top:115px" width="14" height="14" viewBox="0 0 14 14"><circle cx="7" cy="7" r="7" fill="#C07A8A"/><path d="M3.5 10V5.2M3.5 6.6Q3.5 4.6 5.2 4.6Q7 4.6 7 6.6V10M7 6.6Q7 4.6 8.8 4.6Q10.5 4.6 10.5 6.6V10" fill="none" stroke="#3A2428" stroke-width="1.1"/></svg><div style="left:27px;top:114px;font:14px/18px 'Liberation Mono',monospace;letter-spacing:-0.401px;white-space:pre"><span style="color:#589DF6;font-weight:bold">get</span><span style="color:#BBBBBB;font-weight:bold">Secure</span><span style="color:#8C8C8C;-webkit-text-stroke:0">()</span></div><div style="left:447px;top:114px;font:14px/18px 'Liberation Mono',monospace;letter-spacing:-0.401px;white-space:pre;color:#8C8C8C">boolean</div><svg style="left:8px;top:137px" width="14" height="14" viewBox="0 0 14 14"><circle cx="7" cy="7" r="7" fill="#C07A8A"/><path d="M3.5 10V5.2M3.5 6.6Q3.5 4.6 5.2 4.6Q7 4.6 7 6.6V10M7 6.6Q7 4.6 8.8 4.6Q10.5 4.6 10.5 6.6V10" fill="none" stroke="#3A2428" stroke-width="1.1"/></svg><div style="left:27px;top:136px;font:14px/18px 'Liberation Mono',monospace;letter-spacing:-0.401px;white-space:pre"><span style="color:#589DF6;font-weight:bold">get</span><span style="color:#BBBBBB;font-weight:bold">Value</span><span style="color:#8C8C8C;-webkit-text-stroke:0">()</span></div><div style="left:455px;top:136px;font:14px/18px 'Liberation Mono',monospace;letter-spacing:-0.401px;white-space:pre;color:#8C8C8C">String</div><svg style="left:8px;top:159px" width="14" height="14" viewBox="0 0 14 14"><circle cx="7" cy="7" r="7" fill="#C07A8A"/><path d="M3.5 10V5.2M3.5 6.6Q3.5 4.6 5.2 4.6Q7 4.6 7 6.6V10M7 6.6Q7 4.6 8.8 4.6Q10.5 4.6 10.5 6.6V10" fill="none" stroke="#3A2428" stroke-width="1.1"/></svg><div style="left:27px;top:158px;font:14px/18px 'Liberation Mono',monospace;letter-spacing:-0.401px;white-space:pre"><span style="color:#589DF6;font-weight:bold">get</span><span style="color:#BBBBBB;font-weight:bold">Version</span><span style="color:#8C8C8C;-webkit-text-stroke:0">()</span></div><div style="left:479px;top:158px;font:14px/18px 'Liberation Mono',monospace;letter-spacing:-0.401px;white-space:pre;color:#8C8C8C">int</div><svg style="left:8px;top:181px" width="14" height="14" viewBox="0 0 14 14"><circle cx="7" cy="7" r="7" fill="#C07A8A"/><path d="M3.5 10V5.2M3.5 6.6Q3.5 4.6 5.2 4.6Q7 4.6 7 6.6V10M7 6.6Q7 4.6 8.8 4.6Q10.5 4.6 10.5 6.6V10" fill="none" stroke="#3A2428" stroke-width="1.1"/></svg><div style="left:27px;top:180px;font:14px/18px 'Liberation Mono',monospace;letter-spacing:-0.401px;white-space:pre"><span style="color:#589DF6;font-weight:bold">get</span><span style="color:#BBBBBB;font-weight:bold">Class</span><span style="color:#8C8C8C;-webkit-text-stroke:0">()</span></div><div style="left:319px;top:180px;font:14px/18px 'Liberation Mono',monospace;letter-spacing:-0.401px;white-space:pre;color:#8C8C8C">Class&lt;? extends Cookie&gt;</div><div style="left:11px;top:205px;font:11px/14px 'Liberation Sans',sans-serif;color:#8C8C8C;white-space:pre;letter-spacing:-0.05px">Press Enter to insert, Tab to replace</div><div style="left:191px;top:205px;font:11px/14px 'Liberation Sans',sans-serif;color:#589DF6;white-space:pre">Next Tip</div><div style="left:503px;top:207px;width:2px;height:2px;background:#AFB1B3"></div><div style="left:503px;top:211px;width:2px;height:2px;background:#AFB1B3"></div><div style="left:503px;top:215px;width:2px;height:2px;background:#AFB1B3"></div></div>
<div style="left:-9.0px;top:79.0px;width:42px;height:16px;transform:rotate(-90deg);font:11.8px/16px 'Liberation Sans',sans-serif;color:#DDDDDD;white-space:pre;text-align:center">Project</div>
<svg style="left:5px;top:111px;" width="12" height="10" viewBox="0 0 12 10"><path d="M0 0H5L6 2H12V10H0Z" fill="#AFB1B3"/></svg>
<div style="left:-17.5px;top:843.5px;width:59px;height:16px;transform:rotate(-90deg);font:11.8px/16px 'Liberation Sans',sans-serif;color:#BBBBBB;white-space:pre;text-align:center">Bookmarks</div>
<svg style="left:6px;top:887px;" width="10" height="11" viewBox="0 0 10 11"><path d="M0 0H10V11L5 7L0 11Z" fill="#AFB1B3"/></svg>
<div style="left:-11.5px;top:936.5px;width:47px;height:16px;transform:rotate(-90deg);font:11.8px/16px 'Liberation Sans',sans-serif;color:#BBBBBB;white-space:pre;text-align:center">Structure</div>
<svg style="left:6px;top:974px;" width="11" height="11" viewBox="0 0 11 11"><rect x="4" y="0" width="4" height="4" fill="#AFB1B3"/><rect x="0" y="7" width="4" height="4" fill="#AFB1B3"/><rect x="7" y="7" width="4" height="4" fill="#AFB1B3"/></svg>
<svg style="left:1903px;top:71px;" width="12" height="12" viewBox="0 0 12 12"><circle cx="6" cy="6" r="5.3" fill="none" stroke="#AFB1B3" stroke-width="1.2"/><path d="M2 3L10 9M10 3L2 9M6 1V11" stroke="#AFB1B3"/></svg>
<div style="left:1866.5px;top:120.5px;width:83px;height:16px;transform:rotate(90deg);font:11.6px/16px 'Liberation Sans',sans-serif;color:#BBBBBB;white-space:pre;text-align:center">Key Promoter X</div>
<div style="left:1902px;top:189.43px;font:15px/normal 'Liberation Sans',sans-serif;color:#AFB1B3;white-space:pre;font-weight:bold;font-style:italic">m</div>
<div style="left:1890.0px;top:218.0px;width:36px;height:16px;transform:rotate(90deg);font:12px/16px 'Liberation Sans',sans-serif;color:#BBBBBB;white-space:pre;text-align:center">Maven</div>
<svg style="left:1903px;top:264px;" width="13" height="13" viewBox="0 0 13 13"><circle cx="6.5" cy="2.5" r="2.3" fill="#AFB1B3"/><circle cx="2.5" cy="10.5" r="2.3" fill="#AFB1B3"/><circle cx="10.5" cy="10.5" r="2.3" fill="#AFB1B3"/><path d="M6.5 2.5L2.5 10.5M6.5 2.5L10.5 10.5" stroke="#AFB1B3"/></svg>
<div style="left:1881.5px;top:300.5px;width:53px;height:16px;transform:rotate(90deg);font:12px/16px 'Liberation Sans',sans-serif;color:#BBBBBB;white-space:pre;text-align:center">Endpoints</div>
<svg style="left:1903px;top:356px;" width="12" height="14" viewBox="0 0 12 14"><ellipse cx="6" cy="2.5" rx="5.5" ry="2.2" fill="#AFB1B3"/><path d="M0.5 5Q6 8 11.5 5M0.5 8Q6 11 11.5 8M0.5 11Q6 14 11.5 11" fill="none" stroke="#AFB1B3" stroke-width="1.6"/></svg>
<div style="left:1884.0px;top:389.0px;width:48px;height:16px;transform:rotate(90deg);font:12px/16px 'Liberation Sans',sans-serif;color:#BBBBBB;white-space:pre;text-align:center">Database</div>
<svg style="left:1903px;top:442px;" width="14" height="14" viewBox="0 0 14 14"><path d="M2 11Q3 9 3 6Q3 2 7 2Q11 2 11 6Q11 9 12 11Z" fill="#AFB1B3"/><circle cx="7" cy="12.5" r="1.5" fill="#AFB1B3"/><circle cx="11.5" cy="2.5" r="2.3" fill="#3592C4"/></svg>
<div style="left:1874.0px;top:486.0px;width:68px;height:16px;transform:rotate(90deg);font:12px/16px 'Liberation Sans',sans-serif;color:#BBBBBB;white-space:pre;text-align:center">Notifications</div>
<svg style="left:1903px;top:550px;" width="13" height="14" viewBox="0 0 13 14"><rect x="4.5" y="0" width="4" height="4" fill="#AFB1B3"/><rect x="0" y="9" width="4" height="4" fill="#AFB1B3"/><rect x="9" y="9" width="4" height="4" fill="#AFB1B3"/><path d="M6.5 4V7M2 9V7H11V9" fill="none" stroke="#AFB1B3"/></svg>
<div style="left:1882.0px;top:585.0px;width:52px;height:16px;transform:rotate(90deg);font:12px/16px 'Liberation Sans',sans-serif;color:#BBBBBB;white-space:pre;text-align:center">Hierarchy</div>
<svg style="left:34px;top:1003px;" width="11" height="12" viewBox="0 0 11 12"><circle cx="2" cy="2" r="1.6" fill="#AFB1B3"/><circle cx="2" cy="10" r="1.6" fill="#AFB1B3"/><circle cx="9" cy="3" r="1.6" fill="#AFB1B3"/><path d="M2 2V10M9 3Q9 7 2 8" fill="none" stroke="#AFB1B3" stroke-width="1.4"/></svg>
<div style="left:50px;top:1002.69px;font:12.5px/normal 'Liberation Sans',sans-serif;color:#BBBBBB;white-space:pre;letter-spacing:-0.364px;">Version Control</div>
<svg style="left:154px;top:1002px;" width="13" height="14" viewBox="0 0 13 14"><ellipse cx="6" cy="8" rx="4.5" ry="5" fill="#AFB1B3"/><path d="M1 4L0 3M11 4L12 3M0 8H2M10 8H12" stroke="#AFB1B3"/><circle cx="11" cy="12" r="1.8" fill="#30D158"/></svg>
<div style="left:170.3px;top:1002.69px;font:12.5px/normal 'Liberation Sans',sans-serif;color:#BBBBBB;white-space:pre;letter-spacing:-0.427px;">Debug</div>
<svg style="left:227px;top:1004px;" width="11" height="10" viewBox="0 0 11 10"><path d="M0 1H2M0 5H2M0 9H2M4 1H11M4 5H11M4 9H11" stroke="#AFB1B3" stroke-width="1.5"/></svg>
<div style="left:242.5px;top:1002.69px;font:12.5px/normal 'Liberation Sans',sans-serif;color:#BBBBBB;white-space:pre;letter-spacing:-1.221px;">TODO</div>
<svg style="left:295px;top:1003px;" width="12" height="12" viewBox="0 0 12 12"><circle cx="6" cy="6" r="5.8" fill="#AFB1B3"/><path d="M6 2.5V7M6 8.5V10" stroke="#3C3F41" stroke-width="1.6"/></svg>
<div style="left:311.3px;top:1002.69px;font:12.5px/normal 'Liberation Sans',sans-serif;color:#BBBBBB;white-space:pre;letter-spacing:-0.512px;">Problems</div>
<svg style="left:382px;top:1004px;" width="12" height="11" viewBox="0 0 12 11"><rect x="0" y="0" width="12" height="11" fill="#AFB1B3"/><path d="M2 2L4.5 4.5L2 7M5 8.5H9" fill="none" stroke="#3C3F41" stroke-width="1.1"/></svg>
<div style="left:398px;top:1002.69px;font:12.5px/normal 'Liberation Sans',sans-serif;color:#BBBBBB;white-space:pre;letter-spacing:-0.330px;">Terminal</div>
<svg style="left:464px;top:1003px;" width="13" height="13" viewBox="0 0 13 13"><path d="M3.5 0.5H9.5L12.5 6.5L9.5 12.5H3.5L0.5 6.5Z" fill="#AFB1B3"/><path d="M5 3.5L9.5 6.5L5 9.5Z" fill="#3C3F41"/></svg>
<div style="left:481px;top:1002.69px;font:12.5px/normal 'Liberation Sans',sans-serif;color:#BBBBBB;white-space:pre;letter-spacing:-0.779px;">Services</div>
<svg style="left:542px;top:1003px;" width="14" height="14" viewBox="0 0 14 14"><circle cx="6" cy="6" r="5" fill="none" stroke="#AFB1B3" stroke-width="1.3"/><path d="M6 3V6L8 7.5" stroke="#AFB1B3" fill="none"/><path d="M8 7L13 10.5L8 14Z" fill="#AFB1B3"/></svg>
<div style="left:560.3px;top:1002.69px;font:12.5px/normal 'Liberation Sans',sans-serif;color:#BBBBBB;white-space:pre;letter-spacing:-0.237px;">Profiler</div>
<svg style="left:617px;top:1003px;" width="13" height="13" viewBox="0 0 13 13"><path d="M1 4L5 0L7 2L5 4L13 12L12 13L4 5L3 6Z" fill="#AFB1B3"/></svg>
<div style="left:634.4px;top:1002.69px;font:12.5px/normal 'Liberation Sans',sans-serif;color:#BBBBBB;white-space:pre;letter-spacing:-0.339px;">Build</div>
<svg style="left:684px;top:1003px;" width="12" height="13" viewBox="0 0 12 13"><path d="M6 0.5L11.5 3.5L6 6.5L0.5 3.5Z" fill="#AFB1B3"/><path d="M0.5 6.5L6 9.5L11.5 6.5M0.5 9.5L6 12.5L11.5 9.5" fill="none" stroke="#AFB1B3" stroke-width="1.2"/></svg>
<div style="left:700px;top:1002.69px;font:12.5px/normal 'Liberation Sans',sans-serif;color:#BBBBBB;white-space:pre;letter-spacing:-0.493px;">Dependencies</div>
<svg style="left:12px;top:1024px;" width="12" height="12" viewBox="0 0 12 12"><rect x="0.5" y="2.5" width="9" height="9" fill="none" stroke="#AFB1B3"/><path d="M2.5 2.5V0.5H11.5V9.5H9.5" fill="none" stroke="#AFB1B3"/></svg>
<div style="left:39px;top:1022.78px;font:13.5px/normal 'Liberation Sans',sans-serif;color:#BBBBBB;white-space:pre;letter-spacing:0.258px;">Go to Declaration or Usages: Shortcut 'Ctrl+B' missed 58 times // Edit Keybinding // Suppress Alert for this Shortcut (9 minutes ago)</div>
<svg style="left:1666px;top:1023px;" width="15" height="15" viewBox="0 0 15 15"><rect x="0" y="0" width="7" height="7" fill="#F25022"/><rect x="8" y="0" width="7" height="7" fill="#7FBA00"/><rect x="0" y="8" width="7" height="7" fill="#00A4EF"/><rect x="8" y="8" width="7" height="7" fill="#FFB900"/></svg>
<div style="left:1690.5px;top:1022.78px;font:13.5px/normal 'Liberation Sans',sans-serif;color:#BBBBBB;white-space:pre;letter-spacing:0.343px;">66:19</div>
<div style="left:1738px;top:1022.78px;font:13.5px/normal 'Liberation Sans',sans-serif;color:#BBBBBB;white-space:pre;letter-spacing:-1.063px;">CRLF</div>
<div style="left:1781.5px;top:1022.78px;font:13.5px/normal 'Liberation Sans',sans-serif;color:#BBBBBB;white-space:pre;letter-spacing:-0.149px;">UTF-8</div>
<div style="left:1831px;top:1022.78px;font:13.5px/normal 'Liberation Sans',sans-serif;color:#BBBBBB;white-space:pre;letter-spacing:-0.129px;">4 spaces</div>
<svg style="left:1894px;top:1023px;" width="13" height="13" viewBox="0 0 13 13"><rect x="0" y="6" width="9" height="7" fill="#AFB1B3"/><path d="M5 6V3.5Q5 1 8 1Q11 1 11 3.5V5" fill="none" stroke="#AFB1B3" stroke-width="1.5"/></svg>
<div class="clip" style="left:0;top:1040px;width:1920px;height:8px"><div style="left:1508px;top:5px;font:12px/14px 'Liberation Sans',sans-serif;color:#DDDDDD;white-space:pre">^ 3.14 KB/s</div><div style="left:1590px;top:5px;font:12px/14px 'Liberation Sans',sans-serif;color:#DDDDDD;white-space:pre">中 53 %</div><div style="left:1815px;top:5px;font:12px/14px 'Liberation Sans',sans-serif;color:#DDDDDD;white-space:pre">16:40</div><div style="left:1914px;top:0px;width:1px;height:8px;background:#555"></div></div>
</body></html>
